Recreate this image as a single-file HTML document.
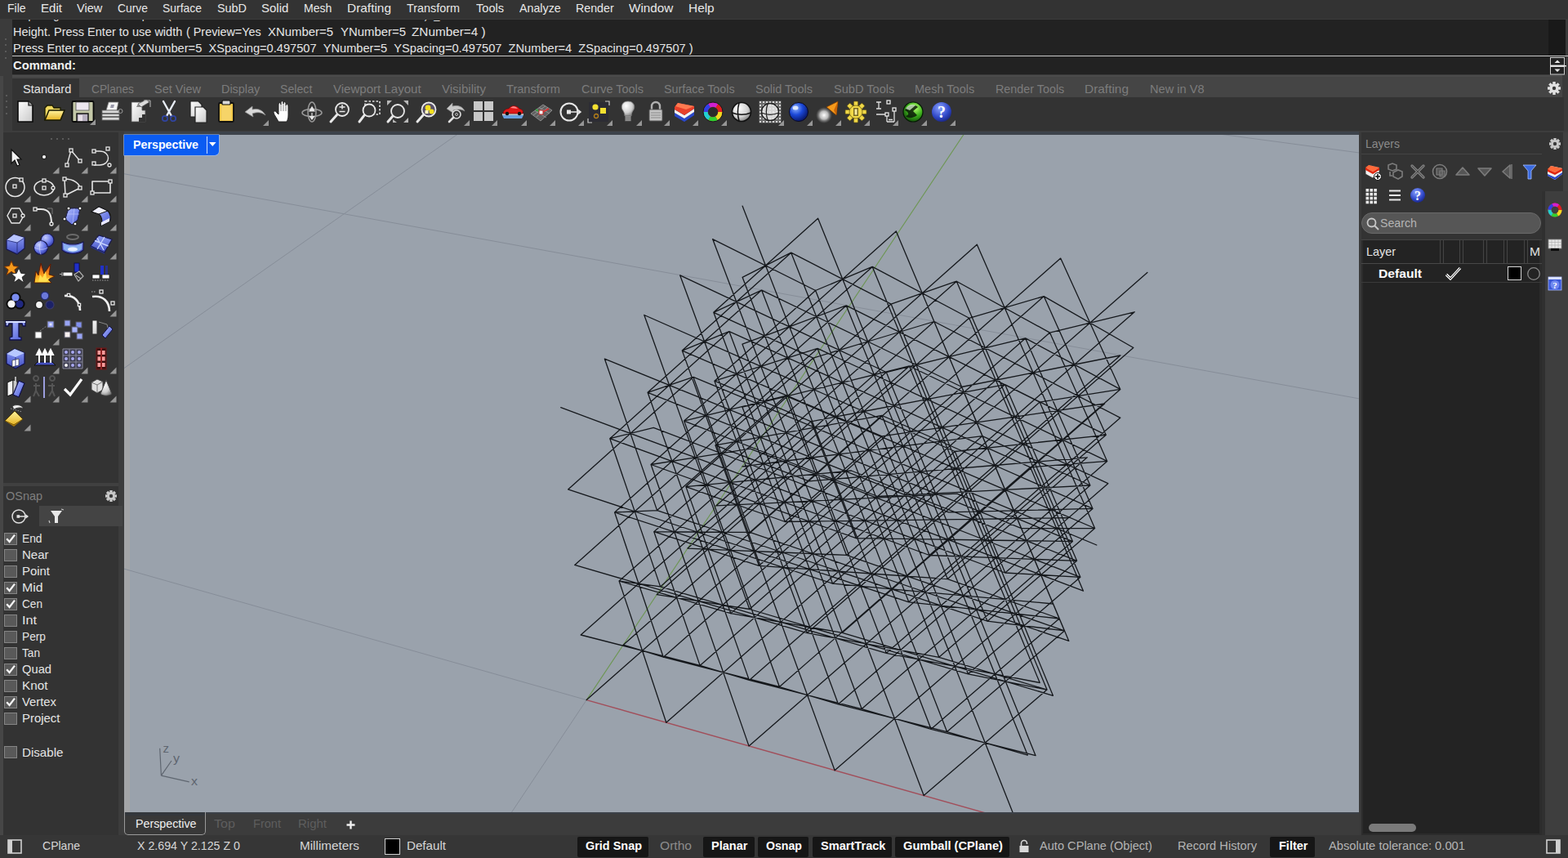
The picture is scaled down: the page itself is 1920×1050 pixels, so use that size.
<!DOCTYPE html>
<html><head><meta charset="utf-8"><title>Rhino 8</title>
<style>
html,body{margin:0;padding:0;background:#3a3a3a;overflow:hidden}
body{width:1920px;height:1050px;position:relative;font-family:"Liberation Sans",sans-serif}
.t{position:absolute;white-space:pre;line-height:1;transform-origin:0 50%;display:block}
.r{position:absolute}
svg{position:absolute;overflow:visible}
</style></head><body>
<div class="r" style="left:0px;top:0px;width:1920px;height:23px;background:#333333;"></div>
<div class="r" style="left:0px;top:23px;width:1920px;height:73px;background:#3b3b3b;"></div>
<div class="r" style="left:15px;top:24px;width:1881px;height:44px;background:#222222;"></div>
<div class="r" style="left:1896px;top:24px;width:21px;height:44px;background:#191919;"></div>
<div class="r" style="left:15px;top:68px;width:1905px;height:1px;background:#c8c8c8;"></div>
<div class="r" style="left:15px;top:69px;width:1881px;height:22px;background:#222222;"></div>
<div class="r" style="left:1896px;top:69px;width:21px;height:22px;background:#222222;"></div>
<div class="r" style="left:15px;top:92px;width:1898px;height:27px;background:#454545;"></div>
<div class="r" style="left:15px;top:92px;width:1898px;height:2px;background:#4b4b4b;"></div>
<div class="r" style="left:0px;top:96px;width:15px;height:65px;background:#3b3b3b;"></div>
<div class="r" style="left:15px;top:96px;width:82px;height:23px;background:#333333;"></div>
<div class="r" style="left:15px;top:119px;width:1900px;height:41px;background:#333333;"></div>
<div class="r" style="left:0px;top:160px;width:1920px;height:2px;background:#3d3d3d;"></div>
<div class="r" style="left:0px;top:162px;width:152px;height:860px;background:#3c3c3c;"></div>
<div class="r" style="left:0px;top:162px;width:145px;height:860px;background:#333333;"></div>
<div class="r" style="left:0px;top:93px;width:4px;height:929px;background:#464646;"></div>
<div class="r" style="left:4px;top:591px;width:141px;height:4px;background:#404040;"></div>
<div class="r" style="left:152px;top:161px;width:1512px;height:4px;background:#3d434b;"></div>
<div class="r" style="left:152px;top:994px;width:1512px;height:4px;background:#3b4047;"></div>
<div class="r" style="left:152px;top:165px;width:1512px;height:829px;background:#9aa2ac;"></div>
<div class="r" style="left:152px;top:165px;width:7px;height:829px;background:#a4a5a7;"></div>
<div class="r" style="left:1667px;top:162px;width:224px;height:860px;background:#333333;"></div>
<div class="r" style="left:1667px;top:293px;width:221px;height:729px;background:#2c2c2c;"></div>
<div class="r" style="left:1669px;top:293px;width:216px;height:727px;background:#232323;"></div>
<div class="r" style="left:1667px;top:188px;width:248px;height:1px;background:#444;"></div>
<div class="r" style="left:1888px;top:162px;width:32px;height:860px;background:#333333;"></div>
<div class="r" style="left:1914px;top:162px;width:6px;height:72px;background:#404040;"></div>
<div class="r" style="left:1892px;top:234px;width:28px;height:788px;background:#3e3e3e;"></div>
<div class="r" style="left:1888px;top:234px;width:4px;height:788px;background:#303030;"></div>
<div class="r" style="left:0px;top:1022px;width:1920px;height:28px;background:#363636;"></div>
<div class="r" style="left:151px;top:996px;width:1514px;height:26px;background:#3c3c3c;"></div>
<div class="r" style="left:6px;top:47px;width:2px;height:2px;background:#5a5a5a;"></div>
<div class="r" style="left:6px;top:54px;width:2px;height:2px;background:#5a5a5a;"></div>
<div class="r" style="left:6px;top:62px;width:2px;height:2px;background:#5a5a5a;"></div>
<div class="r" style="left:6px;top:70px;width:2px;height:2px;background:#5a5a5a;"></div>
<div class="r" style="left:7px;top:116px;width:2px;height:2px;background:#5a5a5a;"></div>
<div class="r" style="left:7px;top:123px;width:2px;height:2px;background:#5a5a5a;"></div>
<div class="r" style="left:7px;top:130px;width:2px;height:2px;background:#5a5a5a;"></div>
<div class="r" style="left:7px;top:138px;width:2px;height:2px;background:#5a5a5a;"></div>
<div class="r" style="left:62px;top:169px;width:2px;height:2px;background:#5a5a5a;"></div>
<div class="r" style="left:69px;top:169px;width:2px;height:2px;background:#5a5a5a;"></div>
<div class="r" style="left:76px;top:169px;width:2px;height:2px;background:#5a5a5a;"></div>
<div class="r" style="left:83px;top:169px;width:2px;height:2px;background:#5a5a5a;"></div>
<span class="t" style="left:9.0px;top:2.8px;font-size:14.8px;color:#e8e8e8;transform:scaleX(0.9519);">File</span>
<span class="t" style="left:50.0px;top:2.8px;font-size:14.8px;color:#e8e8e8;transform:scaleX(1.0195);">Edit</span>
<span class="t" style="left:94.3px;top:2.8px;font-size:14.8px;color:#e8e8e8;transform:scaleX(0.9871);">View</span>
<span class="t" style="left:144.0px;top:2.8px;font-size:14.8px;color:#e8e8e8;transform:scaleX(0.9372);">Curve</span>
<span class="t" style="left:199.3px;top:2.8px;font-size:14.8px;color:#e8e8e8;transform:scaleX(0.9411);">Surface</span>
<span class="t" style="left:265.7px;top:2.8px;font-size:14.8px;color:#e8e8e8;transform:scaleX(0.9724);">SubD</span>
<span class="t" style="left:320.0px;top:2.8px;font-size:14.8px;color:#e8e8e8;transform:scaleX(1.0119);">Solid</span>
<span class="t" style="left:372.3px;top:2.8px;font-size:14.8px;color:#e8e8e8;transform:scaleX(0.9505);">Mesh</span>
<span class="t" style="left:425.0px;top:2.8px;font-size:14.8px;color:#e8e8e8;transform:scaleX(1.0420);">Drafting</span>
<span class="t" style="left:498.3px;top:2.8px;font-size:14.8px;color:#e8e8e8;transform:scaleX(0.9718);">Transform</span>
<span class="t" style="left:582.7px;top:2.8px;font-size:14.8px;color:#e8e8e8;transform:scaleX(0.9841);">Tools</span>
<span class="t" style="left:636.0px;top:2.8px;font-size:14.8px;color:#e8e8e8;transform:scaleX(0.9629);">Analyze</span>
<span class="t" style="left:705.0px;top:2.8px;font-size:14.8px;color:#e8e8e8;transform:scaleX(0.9621);">Render</span>
<span class="t" style="left:770.0px;top:2.8px;font-size:14.8px;color:#e8e8e8;transform:scaleX(1.0316);">Window</span>
<span class="t" style="left:843.3px;top:2.8px;font-size:14.8px;color:#e8e8e8;transform:scaleX(1.0415);">Help</span>
<div class="r" style="left:15px;top:24px;width:1878px;height:44px;overflow:hidden">
<span class="t" style="left:1.0px;top:-12.9px;font-size:14.8px;color:#e0e0e0;transform:scaleX(0.8727);">Y spacing or first reference point ( Preview=Yes &nbsp;XNumber=5 &nbsp;YNumber=5 &nbsp;ZNumber=4 ): _Pause</span>
</div>
<span class="t" style="left:16.0px;top:31.8px;font-size:14.8px;color:#e6e6e6;transform:scaleX(0.9805);">Height. Press Enter to use width</span>
<span class="t" style="left:228.3px;top:31.8px;font-size:14.8px;color:#e6e6e6;transform:scaleX(0.9707);">( Preview=Yes</span>
<span class="t" style="left:328.3px;top:31.8px;font-size:14.8px;color:#e6e6e6;transform:scaleX(1.0078);">XNumber=5</span>
<span class="t" style="left:416.7px;top:31.8px;font-size:14.8px;color:#e6e6e6;transform:scaleX(1.0078);">YNumber=5</span>
<span class="t" style="left:504.3px;top:31.8px;font-size:14.8px;color:#e6e6e6;transform:scaleX(1.0355);">ZNumber=4 )</span>
<span class="t" style="left:16.0px;top:52.3px;font-size:14.8px;color:#e6e6e6;transform:scaleX(0.9885);">Press Enter to accept ( XNumber=5 &nbsp;XSpacing=0.497507 &nbsp;YNumber=5 &nbsp;YSpacing=0.497507 &nbsp;ZNumber=4 &nbsp;ZSpacing=0.497507 )</span>
<span class="t" style="left:16.0px;top:72.8px;font-size:14.8px;font-weight:700;color:#f0f0f0;transform:scaleX(0.9963);">Command:</span>
<span class="t" style="left:28.0px;top:101.6px;font-size:14.8px;color:#e4e4e4;transform:scaleX(0.9872);">Standard</span>
<span class="t" style="left:112.3px;top:101.6px;font-size:14.8px;color:#7c7c7c;transform:scaleX(0.9296);">CPlanes</span>
<span class="t" style="left:189.0px;top:101.6px;font-size:14.8px;color:#7c7c7c;transform:scaleX(0.9804);">Set View</span>
<span class="t" style="left:271.0px;top:101.6px;font-size:14.8px;color:#7c7c7c;transform:scaleX(0.9748);">Display</span>
<span class="t" style="left:343.3px;top:101.6px;font-size:14.8px;color:#7c7c7c;transform:scaleX(0.9578);">Select</span>
<span class="t" style="left:408.3px;top:101.6px;font-size:14.8px;color:#7c7c7c;transform:scaleX(1.0173);">Viewport Layout</span>
<span class="t" style="left:541.0px;top:101.6px;font-size:14.8px;color:#7c7c7c;transform:scaleX(1.0153);">Visibility</span>
<span class="t" style="left:620.0px;top:101.6px;font-size:14.8px;color:#7c7c7c;transform:scaleX(0.9868);">Transform</span>
<span class="t" style="left:711.7px;top:101.6px;font-size:14.8px;color:#7c7c7c;transform:scaleX(0.9759);">Curve Tools</span>
<span class="t" style="left:813.3px;top:101.6px;font-size:14.8px;color:#7c7c7c;transform:scaleX(0.9698);">Surface Tools</span>
<span class="t" style="left:925.0px;top:101.6px;font-size:14.8px;color:#7c7c7c;transform:scaleX(0.9817);">Solid Tools</span>
<span class="t" style="left:1020.7px;top:101.6px;font-size:14.8px;color:#7c7c7c;transform:scaleX(0.9852);">SubD Tools</span>
<span class="t" style="left:1120.0px;top:101.6px;font-size:14.8px;color:#7c7c7c;transform:scaleX(0.9828);">Mesh Tools</span>
<span class="t" style="left:1219.0px;top:101.6px;font-size:14.8px;color:#7c7c7c;transform:scaleX(0.9697);">Render Tools</span>
<span class="t" style="left:1328.3px;top:101.6px;font-size:14.8px;color:#7c7c7c;transform:scaleX(1.0420);">Drafting</span>
<span class="t" style="left:1408.3px;top:101.6px;font-size:14.8px;color:#7c7c7c;transform:scaleX(0.9888);">New in V8</span>
<div class="r" style="left:152px;top:165px;width:116px;height:25px;background:#0a5cf2;border-radius:0 0 5px 0;box-shadow:0 0 0 0.6px #9cc0ff"></div>
<div class="r" style="left:253px;top:167px;width:1px;height:21px;background:#cfe0ff;"></div>
<span class="t" style="left:163.4px;top:170.1px;font-size:14.200000000000001px;font-weight:700;color:#ffffff;transform:scaleX(1.0047);">Perspective</span>
<svg style="left:255.6px;top:173.8px" width="10" height="7"><path d="M0 0 L8.6 0 L4.3 5.1 Z" fill="#fff"/></svg>
<span class="t" style="left:7.0px;top:599.8px;font-size:14.8px;color:#7f7f7f;transform:scaleX(0.9766);">OSnap</span>
<div class="r" style="left:48px;top:619px;width:102px;height:25px;background:#444444;"></div>
<div class="r" style="left:5px;top:651.5px;width:16px;height:15px;background:#595959;border:1px solid #858585;box-sizing:border-box"></div>
<svg style="left:5px;top:651.5px" width="16" height="15"><path d="M3.2 7.2 L6.6 11 L13 2.6" fill="none" stroke="#f4f4f4" stroke-width="2.3"/></svg>
<span class="t" style="left:27.0px;top:652.3px;font-size:14.8px;color:#e4e4e4;transform:scaleX(0.9303);">End</span>
<div class="r" style="left:5px;top:671.5px;width:16px;height:15px;background:#595959;border:1px solid #858585;box-sizing:border-box"></div>
<span class="t" style="left:27.0px;top:672.3px;font-size:14.8px;color:#e4e4e4;transform:scaleX(1.0132);">Near</span>
<div class="r" style="left:5px;top:691.5px;width:16px;height:15px;background:#595959;border:1px solid #858585;box-sizing:border-box"></div>
<span class="t" style="left:27.0px;top:692.3px;font-size:14.8px;color:#e4e4e4;transform:scaleX(1.0079);">Point</span>
<div class="r" style="left:5px;top:711.5px;width:16px;height:15px;background:#595959;border:1px solid #858585;box-sizing:border-box"></div>
<svg style="left:5px;top:711.5px" width="16" height="15"><path d="M3.2 7.2 L6.6 11 L13 2.6" fill="none" stroke="#f4f4f4" stroke-width="2.3"/></svg>
<span class="t" style="left:27.0px;top:712.3px;font-size:14.8px;color:#e4e4e4;transform:scaleX(1.0693);">Mid</span>
<div class="r" style="left:5px;top:731.5px;width:16px;height:15px;background:#595959;border:1px solid #858585;box-sizing:border-box"></div>
<svg style="left:5px;top:731.5px" width="16" height="15"><path d="M3.2 7.2 L6.6 11 L13 2.6" fill="none" stroke="#f4f4f4" stroke-width="2.3"/></svg>
<span class="t" style="left:27.0px;top:732.3px;font-size:14.8px;color:#e4e4e4;transform:scaleX(0.9208);">Cen</span>
<div class="r" style="left:5px;top:751.5px;width:16px;height:15px;background:#595959;border:1px solid #858585;box-sizing:border-box"></div>
<span class="t" style="left:27.0px;top:752.3px;font-size:14.8px;color:#e4e4e4;transform:scaleX(1.0938);">Int</span>
<div class="r" style="left:5px;top:771.5px;width:16px;height:15px;background:#595959;border:1px solid #858585;box-sizing:border-box"></div>
<span class="t" style="left:27.0px;top:772.3px;font-size:14.8px;color:#e4e4e4;transform:scaleX(0.9276);">Perp</span>
<div class="r" style="left:5px;top:791.5px;width:16px;height:15px;background:#595959;border:1px solid #858585;box-sizing:border-box"></div>
<span class="t" style="left:27.0px;top:792.3px;font-size:14.8px;color:#e4e4e4;transform:scaleX(0.9219);">Tan</span>
<div class="r" style="left:5px;top:811.5px;width:16px;height:15px;background:#595959;border:1px solid #858585;box-sizing:border-box"></div>
<svg style="left:5px;top:811.5px" width="16" height="15"><path d="M3.2 7.2 L6.6 11 L13 2.6" fill="none" stroke="#f4f4f4" stroke-width="2.3"/></svg>
<span class="t" style="left:27.0px;top:812.3px;font-size:14.8px;color:#e4e4e4;transform:scaleX(0.9943);">Quad</span>
<div class="r" style="left:5px;top:831.5px;width:16px;height:15px;background:#595959;border:1px solid #858585;box-sizing:border-box"></div>
<span class="t" style="left:27.0px;top:832.3px;font-size:14.8px;color:#e4e4e4;transform:scaleX(1.0346);">Knot</span>
<div class="r" style="left:5px;top:851.5px;width:16px;height:15px;background:#595959;border:1px solid #858585;box-sizing:border-box"></div>
<svg style="left:5px;top:851.5px" width="16" height="15"><path d="M3.2 7.2 L6.6 11 L13 2.6" fill="none" stroke="#f4f4f4" stroke-width="2.3"/></svg>
<span class="t" style="left:27.0px;top:852.3px;font-size:14.8px;color:#e4e4e4;transform:scaleX(1.0010);">Vertex</span>
<div class="r" style="left:5px;top:871.5px;width:16px;height:15px;background:#595959;border:1px solid #858585;box-sizing:border-box"></div>
<span class="t" style="left:27.0px;top:872.3px;font-size:14.8px;color:#e4e4e4;transform:scaleX(1.0095);">Project</span>
<div class="r" style="left:5px;top:913.0px;width:16px;height:15px;background:#595959;border:1px solid #858585;box-sizing:border-box"></div>
<span class="t" style="left:27.0px;top:913.8px;font-size:14.8px;color:#e4e4e4;transform:scaleX(1.0232);">Disable</span>
<span class="t" style="left:1672.0px;top:168.8px;font-size:14.8px;color:#8a8a8a;transform:scaleX(0.9455);">Layers</span>
<div class="r" style="left:1667px;top:260px;width:220px;height:26px;background:#565656;border-radius:13px;border:1px solid #6a6a6a;box-sizing:border-box"></div>
<span class="t" style="left:1690.0px;top:265.8px;font-size:14.8px;color:#b4b4b4;transform:scaleX(0.9596);">Search</span>
<svg style="left:1672px;top:265px" width="18" height="18"><circle cx="7.5" cy="7.5" r="5" fill="none" stroke="#c8c8c8" stroke-width="1.8"/><path d="M11 11 L16 16" stroke="#c8c8c8" stroke-width="2"/></svg>
<div class="r" style="left:1667px;top:293px;width:221px;height:1px;background:#444;"></div>
<div class="r" style="left:1667px;top:322px;width:221px;height:1px;background:#484848;"></div>
<div class="r" style="left:1763px;top:293px;width:1px;height:29px;background:#444;"></div>
<div class="r" style="left:1767px;top:293px;width:1px;height:29px;background:#444;"></div>
<div class="r" style="left:1787px;top:293px;width:1px;height:29px;background:#444;"></div>
<div class="r" style="left:1791px;top:293px;width:1px;height:29px;background:#444;"></div>
<div class="r" style="left:1816px;top:293px;width:1px;height:29px;background:#444;"></div>
<div class="r" style="left:1820px;top:293px;width:1px;height:29px;background:#444;"></div>
<div class="r" style="left:1841px;top:293px;width:1px;height:29px;background:#444;"></div>
<div class="r" style="left:1845px;top:293px;width:1px;height:29px;background:#444;"></div>
<div class="r" style="left:1866px;top:293px;width:1px;height:29px;background:#444;"></div>
<div class="r" style="left:1870px;top:293px;width:1px;height:29px;background:#444;"></div>
<span class="t" style="left:1673.0px;top:301.3px;font-size:14.8px;color:#e4e4e4;transform:scaleX(0.9724);">Layer</span>
<span class="t" style="left:1873.0px;top:301.3px;font-size:14.8px;color:#e4e4e4;transform:scaleX(1.0545);">M</span>
<div class="r" style="left:1667px;top:345px;width:221px;height:1px;background:#3a3a3a;"></div>
<span class="t" style="left:1688.0px;top:327.8px;font-size:14.8px;font-weight:700;color:#ffffff;transform:scaleX(1.0566);">Default</span>
<svg style="left:1768px;top:325px" width="24" height="20"><path d="M3 11 L8 16 L20 3" fill="none" stroke="#fff" stroke-width="3.2"/><path d="M3 11 L8 16 L20 3" fill="none" stroke="#222" stroke-width="1"/></svg>
<div class="r" style="left:1846px;top:326px;width:17px;height:17px;background:#000;border:1.5px solid #d8d8d8;box-sizing:border-box"></div>
<svg style="left:1869px;top:326px" width="18" height="18"><circle cx="9" cy="9" r="7.3" fill="none" stroke="#8a8a8a" stroke-width="1.3"/></svg>
<div class="r" style="left:1676px;top:1008px;width:58px;height:10px;background:#7a7a7a;border-radius:5px"></div>
<div class="r" style="left:152px;top:994px;width:100px;height:28px;background:#383838;border:1px solid #9a9a9a;border-top:none;border-radius:0 0 5px 5px;box-sizing:border-box"></div>
<div class="r" style="left:153px;top:994px;width:98px;height:4px;background:#33373c;"></div>
<span class="t" style="left:166.0px;top:1001.3px;font-size:14.8px;color:#f0f0f0;transform:scaleX(0.9635);">Perspective</span>
<span class="t" style="left:262.0px;top:1001.3px;font-size:14.8px;color:#5e5e5e;transform:scaleX(1.0896);">Top</span>
<span class="t" style="left:310.0px;top:1001.3px;font-size:14.8px;color:#5e5e5e;transform:scaleX(0.9843);">Front</span>
<span class="t" style="left:365.0px;top:1001.3px;font-size:14.8px;color:#5e5e5e;transform:scaleX(1.0130);">Right</span>
<svg style="left:424px;top:1004px" width="11" height="11"><path d="M5.5 0.5V10.5M0.5 5.5H10.5" stroke="#f0f0f0" stroke-width="2.4"/></svg>
<span class="t" style="left:52.0px;top:1028.3px;font-size:14.8px;color:#d6d6d6;transform:scaleX(0.9477);">CPlane</span>
<span class="t" style="left:168.0px;top:1028.3px;font-size:14.8px;color:#d6d6d6;transform:scaleX(0.9610);">X 2.694 Y 2.125 Z 0</span>
<span class="t" style="left:367.0px;top:1028.3px;font-size:14.8px;color:#d6d6d6;transform:scaleX(1.0324);">Millimeters</span>
<div class="r" style="left:471px;top:1026px;width:19px;height:20px;background:#000;border:1.5px solid #d0d0d0;box-sizing:border-box"></div>
<span class="t" style="left:498.0px;top:1028.3px;font-size:14.8px;color:#d6d6d6;transform:scaleX(1.0236);">Default</span>
<div class="r" style="left:707px;top:1023.5px;width:87px;height:25px;background:#161616;border-radius:2px"></div>
<span class="t" style="left:716.5px;top:1028.3px;font-size:14.8px;font-weight:700;color:#ffffff;transform:scaleX(0.9757);">Grid Snap</span>
<span class="t" style="left:808.0px;top:1028.3px;font-size:14.8px;color:#8c8c8c;transform:scaleX(1.0536);">Ortho</span>
<div class="r" style="left:861px;top:1023.5px;width:63px;height:25px;background:#161616;border-radius:2px"></div>
<span class="t" style="left:870.5px;top:1028.3px;font-size:14.8px;font-weight:700;color:#ffffff;transform:scaleX(0.9835);">Planar</span>
<div class="r" style="left:928px;top:1023.5px;width:62px;height:25px;background:#161616;border-radius:2px"></div>
<span class="t" style="left:937.5px;top:1028.3px;font-size:14.8px;font-weight:700;color:#ffffff;transform:scaleX(0.9554);">Osnap</span>
<div class="r" style="left:995px;top:1023.5px;width:97px;height:25px;background:#161616;border-radius:2px"></div>
<span class="t" style="left:1004.5px;top:1028.3px;font-size:14.8px;font-weight:700;color:#ffffff;transform:scaleX(0.9860);">SmartTrack</span>
<div class="r" style="left:1096px;top:1023.5px;width:140px;height:25px;background:#161616;border-radius:2px"></div>
<span class="t" style="left:1106.0px;top:1028.3px;font-size:14.8px;font-weight:700;color:#ffffff;transform:scaleX(0.9890);">Gumball (CPlane)</span>
<span class="t" style="left:1273.0px;top:1028.3px;font-size:14.8px;color:#b4b4b4;transform:scaleX(0.9868);">Auto CPlane (Object)</span>
<span class="t" style="left:1442.0px;top:1028.3px;font-size:14.8px;color:#b4b4b4;transform:scaleX(0.9911);">Record History</span>
<div class="r" style="left:1555px;top:1023.5px;width:55px;height:25px;background:#161616;border-radius:2px"></div>
<span class="t" style="left:1565.5px;top:1028.3px;font-size:14.8px;font-weight:700;color:#ffffff;transform:scaleX(0.9811);">Filter</span>
<span class="t" style="left:1627.0px;top:1028.3px;font-size:14.8px;color:#b4b4b4;transform:scaleX(0.9949);">Absolute tolerance: 0.001</span>
<svg style="left:9px;top:1027px" width="18" height="18"><rect x="1" y="1" width="16" height="16" fill="none" stroke="#d0d0d0" stroke-width="1.6"/><rect x="1" y="1" width="5" height="16" fill="#d0d0d0"/></svg>
<svg style="left:1893px;top:1027px" width="18" height="18"><rect x="1" y="1" width="16" height="16" fill="none" stroke="#d0d0d0" stroke-width="1.6"/><rect x="12" y="1" width="5" height="16" fill="#d0d0d0"/></svg>
<svg style="left:1247px;top:1027px" width="14" height="17"><path d="M3.5 8 V5 a3.5 3.5 0 0 1 7 0 V6" fill="none" stroke="#d8d8d8" stroke-width="1.6"/><rect x="1.5" y="8" width="11" height="8" fill="#d8d8d8"/></svg>
<svg width="0" height="0" style="left:0;top:0"><defs>
<linearGradient id="gW" x1="0" y1="0" x2="1" y2="1"><stop offset="0" stop-color="#ffffff"/><stop offset="1" stop-color="#c8c8c8"/></linearGradient>
<linearGradient id="gY" x1="0" y1="0" x2="0" y2="1"><stop offset="0" stop-color="#fff3a0"/><stop offset="1" stop-color="#e6b422"/></linearGradient>
<linearGradient id="gB" x1="0" y1="0" x2="1" y2="1"><stop offset="0" stop-color="#b4c0ff"/><stop offset="1" stop-color="#4a5ad8"/></linearGradient>
<linearGradient id="gB2" x1="0" y1="0" x2="0" y2="1"><stop offset="0" stop-color="#8fa0f8"/><stop offset="1" stop-color="#3f4cc0"/></linearGradient>
<radialGradient id="gSph" cx="0.35" cy="0.3" r="0.8"><stop offset="0" stop-color="#ffffff"/><stop offset="0.6" stop-color="#d0d0d0"/><stop offset="1" stop-color="#707070"/></radialGradient>
<radialGradient id="gBlue" cx="0.35" cy="0.3" r="0.8"><stop offset="0" stop-color="#8fb4ff"/><stop offset="0.45" stop-color="#1b48d8"/><stop offset="1" stop-color="#040c50"/></radialGradient>
<radialGradient id="gHelp" cx="0.4" cy="0.3" r="0.8"><stop offset="0" stop-color="#8aa2ff"/><stop offset="0.6" stop-color="#3048c8"/><stop offset="1" stop-color="#141c70"/></radialGradient>
<radialGradient id="gGreen" cx="0.6" cy="0.3" r="0.8"><stop offset="0" stop-color="#b8ff70"/><stop offset="0.5" stop-color="#3cae1c"/><stop offset="1" stop-color="#0a3a06"/></radialGradient>
<radialGradient id="gBS" cx="0.35" cy="0.3" r="0.8"><stop offset="0" stop-color="#c4ccff"/><stop offset="0.6" stop-color="#6474e6"/><stop offset="1" stop-color="#28309a"/></radialGradient>
<radialGradient id="gGlow" cx="0.5" cy="0.5" r="0.5"><stop offset="0" stop-color="#ffffff"/><stop offset="0.5" stop-color="#dddddd" stop-opacity="0.8"/><stop offset="1" stop-color="#888" stop-opacity="0"/></radialGradient>
<linearGradient id="gFire" x1="0" y1="0" x2="0" y2="1"><stop offset="0" stop-color="#d8401a"/><stop offset="0.6" stop-color="#f59a1c"/><stop offset="1" stop-color="#ffd83a"/></linearGradient>
</defs></svg>
<svg style="left:11px;top:117px" width="40" height="40" viewBox="-20 -20 40 40"><path d="M-9 -13 H4 L9 -8 V12 H-9 Z" fill="url(#gW)" stroke="#0a0a0a" stroke-width="1.6"/><path d="M4 -13 V-8 H9" fill="#aaa" stroke="#0a0a0a" stroke-width="1.2"/></svg>
<svg style="left:46px;top:117px" width="40" height="40" viewBox="-20 -20 40 40"><path d="M-11 10 V-5 L-8 -8 H-2 L0 -5 H8 V-2" fill="#f0d860" stroke="#1a1a00" stroke-width="1.3"/><path d="M-11 10 L-6 -2 H13 L8 10 Z" fill="url(#gY)" stroke="#1a1a00" stroke-width="1.5"/></svg>
<svg style="left:81px;top:117px" width="40" height="40" viewBox="-20 -20 40 40"><rect x="-12.5" y="-13" width="26" height="25" rx="1.5" fill="#c4c8a8" stroke="#0a0a0a" stroke-width="1.8"/><rect x="-8" y="-12" width="16" height="10" fill="#ece6ee" stroke="#555" stroke-width="0.8"/><rect x="-7" y="2" width="14" height="10" fill="#b8b0c0" stroke="#0a0a0a" stroke-width="1.4"/><rect x="-5" y="4" width="5" height="7" fill="#e8e0e8"/><path d="M16 9 L16 16 L9 16 Z" fill="#969696"/></svg>
<svg style="left:116px;top:117px" width="40" height="40" viewBox="-20 -20 40 40"><path d="M-6 -2 L-3 -12 H9 L7 -2 Z" fill="#f4f4f4" stroke="#777" stroke-width="0.8"/><path d="M0 -9 L4 -9 L3 -5 L-1 -5Z" fill="#99a"/><rect x="-11" y="-2" width="21" height="12" fill="#d8d8d8" stroke="#666" stroke-width="0.8"/><path d="M-11 2 H10 M-11 6 H10" stroke="#4a4a4a" stroke-width="1.6"/><circle cx="11.5" cy="-1" r="2.5" fill="none" stroke="#999" stroke-width="1"/></svg>
<svg style="left:151px;top:117px" width="40" height="40" viewBox="-20 -20 40 40"><path d="M-10 -12 H3 V-2 H7 V12 H-10 Z" fill="url(#gW)" stroke="#555" stroke-width="0.8"/><path d="M7 3 H3 V7 H-1 V12 H7Z" fill="#333"/><path d="M-2 -10 L8 -15 L12 -12 L2 -6 Z" fill="#ddd" stroke="#555" stroke-width="0.8"/><path d="M5 -14 H13 V-6" fill="none" stroke="#bbb" stroke-width="1"/><path d="M-4 -6 L-2 -10 L2 -6Z" fill="#888"/></svg>
<svg style="left:187px;top:117px" width="40" height="40" viewBox="-20 -20 40 40"><path d="M-7 -13 L3 5 M7 -13 L-3 5" stroke="#e8eef8" stroke-width="2.4" stroke-linecap="round"/><circle cx="-5" cy="8" r="3.2" fill="none" stroke="#3044a0" stroke-width="1.8"/><circle cx="5" cy="8" r="3.2" fill="none" stroke="#3044a0" stroke-width="1.8"/></svg>
<svg style="left:222px;top:117px" width="40" height="40" viewBox="-20 -20 40 40"><path d="M-9 -13 H1 L5 -9 V6 H-9 Z" fill="url(#gW)" stroke="#222" stroke-width="1.2"/><path d="M-3 -6 H7 L11 -2 V13 H-3 Z" fill="url(#gW)" stroke="#222" stroke-width="1.2"/></svg>
<svg style="left:257px;top:117px" width="40" height="40" viewBox="-20 -20 40 40"><rect x="-9" y="-11" width="18" height="23" rx="1.5" fill="#f2c84a" stroke="#111" stroke-width="1.8"/><rect x="-6" y="-8" width="12" height="18" fill="#f6d468"/><rect x="-5" y="-14" width="10" height="5" rx="1" fill="#d8d8d8" stroke="#111" stroke-width="1.2"/></svg>
<svg style="left:292px;top:117px" width="40" height="40" viewBox="-20 -20 40 40"><path d="M-12 0 L-3 -7 L-3 -3 C4 -5 10 -2 13 4 C8 0 3 0 -3 2 L-2 6 Z" fill="#d8d8d8" stroke="#8a8a8a" stroke-width="0.8"/><path d="M17 10 L17 17 L10 17 Z" fill="#969696"/></svg>
<svg style="left:327px;top:117px" width="40" height="40" viewBox="-20 -20 40 40"><path d="M-6 12 C-8 8 -11 4 -12 1 C-12 -1 -10 -2 -8 1 L-6 3 V-9 C-6 -12 -3 -12 -3 -9 V-11 C-3 -14 0 -14 0 -11 V-10 C0 -13 3 -13 3 -10 V-8 C3 -10 6 -10 6 -7 V4 C6 8 5 10 4 12 Z" fill="#fdfdfd" stroke="#222" stroke-width="1"/><path d="M-3 -9 V-1 M0 -10 V-1 M3 -8 V-1" stroke="#777" stroke-width="0.9"/></svg>
<svg style="left:362px;top:117px" width="40" height="40" viewBox="-20 -20 40 40"><ellipse cx="0" cy="0" rx="5" ry="12" fill="none" stroke="#9a9a9a" stroke-width="1.5"/><ellipse cx="0" cy="1" rx="12" ry="4.5" fill="none" stroke="#9a9a9a" stroke-width="1.5"/><path d="M0 -6 L-3 -1 H3Z M0 1 V8 M-3 5 L0 9 L3 5" fill="#e8e8e8" stroke="#e8e8e8" stroke-width="1.2"/></svg>
<svg style="left:397px;top:117px" width="40" height="40" viewBox="-20 -20 40 40"><path d="M-3.76 2.76 L-12 12" stroke="#e8e8e8" stroke-width="3" stroke-linecap="round"/><circle cx="2" cy="-3" r="8" fill="#3a3a3a" stroke="#e8e8e8" stroke-width="1.8"/><path d="M-1.5 -6 H5.5 M2 -9 V-3.5 M-1.5 -0.5 H5.5" stroke="#e8e8e8" stroke-width="1.5"/></svg>
<svg style="left:432px;top:117px" width="40" height="40" viewBox="-20 -20 40 40"><rect x="-5" y="-13" width="18" height="16" fill="none" stroke="#e0e0e0" stroke-width="1.6" stroke-dasharray="2.5 2"/><path d="M-5.3999999999999995 3.3999999999999995 L-12 12" stroke="#e8e8e8" stroke-width="3" stroke-linecap="round"/><circle cx="0" cy="-2" r="7.5" fill="#3a3a3a" stroke="#e8e8e8" stroke-width="1.8"/></svg>
<svg style="left:467px;top:117px" width="40" height="40" viewBox="-20 -20 40 40"><path d="M-5.76 4.76 L-12 12" stroke="#e8e8e8" stroke-width="3" stroke-linecap="round"/><circle cx="0" cy="-1" r="8" fill="#3a3a3a" stroke="#e8e8e8" stroke-width="1.8"/><path d="M-13 -14 H-7 L-13 -8Z M13 -14 H7 L13 -8Z M13 13 H7 L13 7Z M-6 13 H-1 L-6 9Z" fill="#b8b8b8"/></svg>
<svg style="left:503px;top:117px" width="40" height="40" viewBox="-20 -20 40 40"><path d="M-4.12 3.12 L-12 12" stroke="#e8e8e8" stroke-width="3" stroke-linecap="round"/><circle cx="2" cy="-3" r="8.5" fill="#585068" stroke="#e8e8e8" stroke-width="1.8"/><circle cx="1" cy="-5" r="3.4" fill="#f4e020"/><circle cx="5.5" cy="-0.5" r="3" fill="#f4e020"/><rect x="-2.5" y="-2" width="4" height="4" fill="#fff8c0"/></svg>
<svg style="left:538px;top:117px" width="40" height="40" viewBox="-20 -20 40 40"><path d="M-11 -4 L-4 -11 L-4 -7 C3 -9 9 -6 11 -1 C6 -4 2 -3 -3 -2 L-2 2 Z" fill="#c8c8c8" stroke="#888" stroke-width="0.8"/><circle cx="1" cy="3" r="5" fill="#3a3a3a" stroke="#e0e0e0" stroke-width="1.6"/><circle cx="1" cy="3" r="1.5" fill="none" stroke="#bbb" stroke-width="1"/><path d="M-3 7 L-8 12" stroke="#e0e0e0" stroke-width="2.6" stroke-linecap="round"/><path d="M17 10 L17 17 L10 17 Z" fill="#969696"/></svg>
<svg style="left:572px;top:117px" width="40" height="40" viewBox="-20 -20 40 40"><rect x="-12" y="-13" width="11" height="11" fill="#c8c8c8"/><rect x="1" y="-13" width="11" height="11" fill="#c8c8c8"/><rect x="-12" y="0" width="11" height="11" fill="#c8c8c8"/><rect x="1" y="0" width="11" height="11" fill="#c8c8c8"/><path d="M17 10 L17 17 L10 17 Z" fill="#969696"/></svg>
<svg style="left:608px;top:117px" width="40" height="40" viewBox="-20 -20 40 40"><path d="M-13 4 H13 L11 8 H-11Z" fill="#68a0e0"/><path d="M-13 3 H13" stroke="#f0f0f0" stroke-width="1.5"/><path d="M-12 1 C-11 -3 -7 -4 -5 -4 C-3 -8 4 -9 8 -4 C12 -3 13 -1 12 2 H-12Z" fill="#e01818" stroke="#700" stroke-width="0.6"/><path d="M-3 -5 C0 -8 4 -7 6 -4Z" fill="#f88"/><circle cx="-7" cy="2" r="2.2" fill="#111"/><circle cx="8" cy="2" r="2.2" fill="#111"/><path d="M17 10 L17 17 L10 17 Z" fill="#969696"/></svg>
<svg style="left:643px;top:117px" width="40" height="40" viewBox="-20 -20 40 40"><path d="M-13 2 L2 -9 L13 -2 L-1 11Z" fill="#606060" stroke="#9a9a9a" stroke-width="0.8"/><path d="M-8 -1.5 L6 7 M-3 -5.5 L10 2 M-6 6 L8 -5.5 M-10 4 L5 -7.5" stroke="#a8a8a8" stroke-width="0.7"/><path d="M0 1 L9 -4" stroke="#e03030" stroke-width="1.8"/><path d="M0 1 L-7 -3" stroke="#30b040" stroke-width="1.8"/><rect x="-3" y="-2" width="5" height="5" fill="#f8f8f8" stroke="#c02020" stroke-width="1"/><path d="M17 10 L17 17 L10 17 Z" fill="#969696"/></svg>
<svg style="left:678px;top:117px" width="40" height="40" viewBox="-20 -20 40 40"><circle cx="-1" cy="0" r="10.5" fill="none" stroke="#e8e8e8" stroke-width="2"/><rect x="-4" y="-2.5" width="5" height="5" fill="#e8e8e8"/><path d="M1 0 H13 M10 -2.5 L13 0 L10 2.5" stroke="#e8e8e8" stroke-width="1.5" fill="none"/><path d="M17 10 L17 17 L10 17 Z" fill="#969696"/></svg>
<svg style="left:713px;top:117px" width="40" height="40" viewBox="-20 -20 40 40"><rect x="-12" y="-12" width="24" height="24" fill="#2c2c34"/><circle cx="-4" cy="-6" r="3.6" fill="#f4e030"/><rect x="2" y="-5" width="7" height="7" fill="#f4e030"/><circle cx="-3" cy="5" r="2.5" fill="none" stroke="#b88018" stroke-width="1.3"/><path d="M-13 8 V13 H-8 M8 -13 H13 V-8" stroke="#ccc" stroke-width="1.2" fill="none"/><path d="M17 10 L17 17 L10 17 Z" fill="#969696"/></svg>
<svg style="left:749px;top:117px" width="40" height="40" viewBox="-20 -20 40 40"><path d="M0 -13 C7 -13 9 -7 7 -3 C5 0 4 2 4 5 H-4 C-4 2 -5 0 -7 -3 C-9 -7 -7 -13 0 -13Z" fill="url(#gSph)" stroke="#888" stroke-width="0.8"/><rect x="-3.5" y="5" width="7" height="6" fill="#a8a8a8" stroke="#666" stroke-width="0.7"/><path d="M-3.5 7 H3.5 M-3.5 9 H3.5" stroke="#555" stroke-width="0.8"/><path d="M17 10 L17 17 L10 17 Z" fill="#969696"/></svg>
<svg style="left:783px;top:117px" width="40" height="40" viewBox="-20 -20 40 40"><path d="M-5 -3 V-7 a5 5 0 0 1 10 0 V-3" fill="none" stroke="#b0b0b0" stroke-width="2.4"/><rect x="-8" y="-3" width="16" height="14" rx="1" fill="#c4c4c4" stroke="#555" stroke-width="1"/><path d="M-6 1 H6 M-6 4 H6 M-6 7 H6" stroke="#8a8a8a" stroke-width="1.2"/><path d="M17 10 L17 17 L10 17 Z" fill="#969696"/></svg>
<svg style="left:818px;top:117px" width="40" height="40" viewBox="-20 -20 40 40"><path d="M-12 -1 L-8 -11 L12 -6 L12 4 L0 12 L-12 5Z" fill="#1c2a80"/><path d="M-12 1 L0 8 L12 0 V4 L0 12 L-12 5Z" fill="#2a48c8"/><path d="M-12 -3 L0 4 L12 -4 V0 L0 8 L-12 1Z" fill="#f4f4f4"/><path d="M-12 -6 L-8 -11 L12 -7 V-4 L0 4 L-12 -3Z" fill="#e8402a"/><path d="M-8 -11 L12 -7 L2 -3 L-11 -7Z" fill="#ff7a50"/><path d="M17 10 L17 17 L10 17 Z" fill="#969696"/></svg>
<svg style="left:853px;top:117px" width="40" height="40" viewBox="-20 -20 40 40"><circle r="9" fill="none" stroke="#e02020" stroke-width="5.5"/><circle r="9" fill="none" stroke="#f0d820" stroke-width="5.5" stroke-dasharray="9.42 47.12" stroke-dashoffset="0"/><circle r="9" fill="none" stroke="#30d030" stroke-width="5.5" stroke-dasharray="9.42 47.12" stroke-dashoffset="-9.42"/><circle r="9" fill="none" stroke="#20d0d0" stroke-width="5.5" stroke-dasharray="9.42 47.12" stroke-dashoffset="-18.84"/><circle r="9" fill="none" stroke="#3040e8" stroke-width="5.5" stroke-dasharray="9.42 47.12" stroke-dashoffset="-28.26"/><circle r="9" fill="none" stroke="#d020d0" stroke-width="5.5" stroke-dasharray="9.42 47.12" stroke-dashoffset="-37.68"/><circle r="12" fill="none" stroke="#1a1a1a" stroke-width="1"/><circle r="5.8" fill="#2a2a2a"/><path d="M17 10 L17 17 L10 17 Z" fill="#969696"/></svg>
<svg style="left:888px;top:117px" width="40" height="40" viewBox="-20 -20 40 40"><circle r="11.5" fill="url(#gSph)" stroke="#111" stroke-width="1.6"/><path d="M-3 -11 C-5 -4 -5 4 -3 11 M-11.5 1 C-4 4 4 4 11.5 1" fill="none" stroke="#111" stroke-width="1.5"/></svg>
<svg style="left:923px;top:117px" width="40" height="40" viewBox="-20 -20 40 40"><rect x="-13.5" y="-13.5" width="27" height="27" fill="#6c6c6c"/><rect x="-13" y="-13" width="2" height="2" fill="#d8d8d8"/><rect x="-13" y="-9" width="2" height="2" fill="#d8d8d8"/><rect x="-13" y="-5" width="2" height="2" fill="#d8d8d8"/><rect x="-13" y="-1" width="2" height="2" fill="#d8d8d8"/><rect x="-13" y="3" width="2" height="2" fill="#d8d8d8"/><rect x="-13" y="7" width="2" height="2" fill="#d8d8d8"/><rect x="-13" y="11" width="2" height="2" fill="#d8d8d8"/><rect x="-9" y="-13" width="2" height="2" fill="#d8d8d8"/><rect x="-9" y="-9" width="2" height="2" fill="#d8d8d8"/><rect x="-9" y="-5" width="2" height="2" fill="#d8d8d8"/><rect x="-9" y="-1" width="2" height="2" fill="#d8d8d8"/><rect x="-9" y="3" width="2" height="2" fill="#d8d8d8"/><rect x="-9" y="7" width="2" height="2" fill="#d8d8d8"/><rect x="-9" y="11" width="2" height="2" fill="#d8d8d8"/><rect x="-5" y="-13" width="2" height="2" fill="#d8d8d8"/><rect x="-5" y="-9" width="2" height="2" fill="#d8d8d8"/><rect x="-5" y="-5" width="2" height="2" fill="#d8d8d8"/><rect x="-5" y="-1" width="2" height="2" fill="#d8d8d8"/><rect x="-5" y="3" width="2" height="2" fill="#d8d8d8"/><rect x="-5" y="7" width="2" height="2" fill="#d8d8d8"/><rect x="-5" y="11" width="2" height="2" fill="#d8d8d8"/><rect x="-1" y="-13" width="2" height="2" fill="#d8d8d8"/><rect x="-1" y="-9" width="2" height="2" fill="#d8d8d8"/><rect x="-1" y="-5" width="2" height="2" fill="#d8d8d8"/><rect x="-1" y="-1" width="2" height="2" fill="#d8d8d8"/><rect x="-1" y="3" width="2" height="2" fill="#d8d8d8"/><rect x="-1" y="7" width="2" height="2" fill="#d8d8d8"/><rect x="-1" y="11" width="2" height="2" fill="#d8d8d8"/><rect x="3" y="-13" width="2" height="2" fill="#d8d8d8"/><rect x="3" y="-9" width="2" height="2" fill="#d8d8d8"/><rect x="3" y="-5" width="2" height="2" fill="#d8d8d8"/><rect x="3" y="-1" width="2" height="2" fill="#d8d8d8"/><rect x="3" y="3" width="2" height="2" fill="#d8d8d8"/><rect x="3" y="7" width="2" height="2" fill="#d8d8d8"/><rect x="3" y="11" width="2" height="2" fill="#d8d8d8"/><rect x="7" y="-13" width="2" height="2" fill="#d8d8d8"/><rect x="7" y="-9" width="2" height="2" fill="#d8d8d8"/><rect x="7" y="-5" width="2" height="2" fill="#d8d8d8"/><rect x="7" y="-1" width="2" height="2" fill="#d8d8d8"/><rect x="7" y="3" width="2" height="2" fill="#d8d8d8"/><rect x="7" y="7" width="2" height="2" fill="#d8d8d8"/><rect x="7" y="11" width="2" height="2" fill="#d8d8d8"/><rect x="11" y="-13" width="2" height="2" fill="#d8d8d8"/><rect x="11" y="-9" width="2" height="2" fill="#d8d8d8"/><rect x="11" y="-5" width="2" height="2" fill="#d8d8d8"/><rect x="11" y="-1" width="2" height="2" fill="#d8d8d8"/><rect x="11" y="3" width="2" height="2" fill="#d8d8d8"/><rect x="11" y="7" width="2" height="2" fill="#d8d8d8"/><rect x="11" y="11" width="2" height="2" fill="#d8d8d8"/><circle r="10.5" fill="#e8e8e8" fill-opacity="0.85" stroke="#222" stroke-width="1.4"/><path d="M-3 -10 C-5 -4 -5 4 -3 10 M-10.5 1 C-4 4 4 4 10.5 1" fill="none" stroke="#222" stroke-width="1.3"/><path d="M17 10 L17 17 L10 17 Z" fill="#969696"/></svg>
<svg style="left:958px;top:117px" width="40" height="40" viewBox="-20 -20 40 40"><circle r="11.5" fill="url(#gBlue)" stroke="#0a0a20" stroke-width="1"/><ellipse cx="-4" cy="-5" rx="3.5" ry="2.5" fill="#e8f0ff" fill-opacity="0.9"/><path d="M17 10 L17 17 L10 17 Z" fill="#969696"/></svg>
<svg style="left:993px;top:117px" width="40" height="40" viewBox="-20 -20 40 40"><circle cx="-4" cy="4" r="10" fill="url(#gGlow)"/><path d="M-1 -6 L13 -13 L11 4 Z" fill="#f59a1c" stroke="#7a3a00" stroke-width="0.8"/><path d="M13 -13 L11 4 L8 -2Z" fill="#c86408"/><path d="M17 10 L17 17 L10 17 Z" fill="#969696"/></svg>
<svg style="left:1028px;top:117px" width="40" height="40" viewBox="-20 -20 40 40"><rect x="-2.6" y="-13" width="5.2" height="7" rx="1" fill="#f0d848" stroke="#6a5a10" stroke-width="0.7" transform="rotate(0)"/><rect x="-2.6" y="-13" width="5.2" height="7" rx="1" fill="#f0d848" stroke="#6a5a10" stroke-width="0.7" transform="rotate(45)"/><rect x="-2.6" y="-13" width="5.2" height="7" rx="1" fill="#f0d848" stroke="#6a5a10" stroke-width="0.7" transform="rotate(90)"/><rect x="-2.6" y="-13" width="5.2" height="7" rx="1" fill="#f0d848" stroke="#6a5a10" stroke-width="0.7" transform="rotate(135)"/><rect x="-2.6" y="-13" width="5.2" height="7" rx="1" fill="#f0d848" stroke="#6a5a10" stroke-width="0.7" transform="rotate(180)"/><rect x="-2.6" y="-13" width="5.2" height="7" rx="1" fill="#f0d848" stroke="#6a5a10" stroke-width="0.7" transform="rotate(225)"/><rect x="-2.6" y="-13" width="5.2" height="7" rx="1" fill="#f0d848" stroke="#6a5a10" stroke-width="0.7" transform="rotate(270)"/><rect x="-2.6" y="-13" width="5.2" height="7" rx="1" fill="#f0d848" stroke="#6a5a10" stroke-width="0.7" transform="rotate(315)"/><circle r="8" fill="#f0d848" stroke="#6a5a10" stroke-width="0.8"/><rect x="-3" y="-5" width="6" height="10" fill="#7a6a20"/><rect x="-1.5" y="-3.5" width="3" height="7" fill="#f8ecA0"/><path d="M17 10 L17 17 L10 17 Z" fill="#969696"/></svg>
<svg style="left:1063px;top:117px" width="40" height="40" viewBox="-20 -20 40 40"><path d="M-10 -12 H-4 M-10 -4 H-4 M-7 -12 V-4 M-10 3 H3 M3 3 V12 M3 12 H12 M12 12 V-3 M5 9.5 H10" fill="none" stroke="#e0e0e0" stroke-width="1.3"/><rect x="3" y="-14" width="4" height="4" fill="#333" stroke="#e6e6e6" stroke-width="1.3"/><rect x="1" y="1" width="4" height="4" fill="#333" stroke="#e6e6e6" stroke-width="1.3"/><rect x="10" y="-5" width="4" height="4" fill="#333" stroke="#e6e6e6" stroke-width="1.3"/><path d="M17 10 L17 17 L10 17 Z" fill="#969696"/></svg>
<svg style="left:1098px;top:117px" width="40" height="40" viewBox="-20 -20 40 40"><circle r="12" fill="url(#gGreen)" stroke="#041a02" stroke-width="1.2"/><path d="M-10 -2 C-6 -9 2 -10 6 -6 L0 -1 L5 4 C0 8 -6 8 -9 5 C-5 4 -4 1 -10 -2Z" fill="#0a1a08" fill-opacity="0.85"/><path d="M-9 -4 C-6 -9 -1 -10 3 -8 L-4 -2Z" fill="#e8ffe0" fill-opacity="0.7"/><path d="M17 10 L17 17 L10 17 Z" fill="#969696"/></svg>
<svg style="left:1133px;top:117px" width="40" height="40" viewBox="-20 -20 40 40"><circle r="12" fill="url(#gHelp)"/><text x="0" y="6.5" text-anchor="middle" font-family="Liberation Serif,serif" font-weight="700" font-size="20" fill="#fff">?</text><path d="M17 10 L17 17 L10 17 Z" fill="#969696"/></svg>
<svg style="left:1893px;top:98px" width="20" height="20" viewBox="-10 -10 20 20"><rect x="-1.7" y="-8" width="3.4" height="4" fill="#e0e0e0" transform="rotate(0)"/><rect x="-1.7" y="-8" width="3.4" height="4" fill="#e0e0e0" transform="rotate(45)"/><rect x="-1.7" y="-8" width="3.4" height="4" fill="#e0e0e0" transform="rotate(90)"/><rect x="-1.7" y="-8" width="3.4" height="4" fill="#e0e0e0" transform="rotate(135)"/><rect x="-1.7" y="-8" width="3.4" height="4" fill="#e0e0e0" transform="rotate(180)"/><rect x="-1.7" y="-8" width="3.4" height="4" fill="#e0e0e0" transform="rotate(225)"/><rect x="-1.7" y="-8" width="3.4" height="4" fill="#e0e0e0" transform="rotate(270)"/><rect x="-1.7" y="-8" width="3.4" height="4" fill="#e0e0e0" transform="rotate(315)"/><circle r="5.7" fill="#e0e0e0"/><circle r="2.2" fill="#3a3a3a"/></svg>
<svg style="left:126px;top:597px" width="20" height="20" viewBox="-10 -10 20 20"><rect x="-1.7" y="-7" width="3.4" height="4" fill="#c8c8c8" transform="rotate(0)"/><rect x="-1.7" y="-7" width="3.4" height="4" fill="#c8c8c8" transform="rotate(45)"/><rect x="-1.7" y="-7" width="3.4" height="4" fill="#c8c8c8" transform="rotate(90)"/><rect x="-1.7" y="-7" width="3.4" height="4" fill="#c8c8c8" transform="rotate(135)"/><rect x="-1.7" y="-7" width="3.4" height="4" fill="#c8c8c8" transform="rotate(180)"/><rect x="-1.7" y="-7" width="3.4" height="4" fill="#c8c8c8" transform="rotate(225)"/><rect x="-1.7" y="-7" width="3.4" height="4" fill="#c8c8c8" transform="rotate(270)"/><rect x="-1.7" y="-7" width="3.4" height="4" fill="#c8c8c8" transform="rotate(315)"/><circle r="4.7" fill="#c8c8c8"/><circle r="2.2" fill="#3a3a3a"/></svg>
<svg style="left:1894px;top:166px" width="20" height="20" viewBox="-10 -10 20 20"><rect x="-1.7" y="-7" width="3.4" height="4" fill="#c8c8c8" transform="rotate(0)"/><rect x="-1.7" y="-7" width="3.4" height="4" fill="#c8c8c8" transform="rotate(45)"/><rect x="-1.7" y="-7" width="3.4" height="4" fill="#c8c8c8" transform="rotate(90)"/><rect x="-1.7" y="-7" width="3.4" height="4" fill="#c8c8c8" transform="rotate(135)"/><rect x="-1.7" y="-7" width="3.4" height="4" fill="#c8c8c8" transform="rotate(180)"/><rect x="-1.7" y="-7" width="3.4" height="4" fill="#c8c8c8" transform="rotate(225)"/><rect x="-1.7" y="-7" width="3.4" height="4" fill="#c8c8c8" transform="rotate(270)"/><rect x="-1.7" y="-7" width="3.4" height="4" fill="#c8c8c8" transform="rotate(315)"/><circle r="4.7" fill="#c8c8c8"/><circle r="2.2" fill="#3a3a3a"/></svg>
<svg style="left:1898px;top:70px" width="20" height="22" viewBox="0 0 20 22"><rect x="0.5" y="0.5" width="17" height="9.5" fill="#222" stroke="#cfcfcf" stroke-width="1"/><rect x="0.5" y="11.5" width="17" height="9.5" fill="#222" stroke="#cfcfcf" stroke-width="1"/><path d="M5.5 7 L9 3.5 L12.5 7Z M5.5 14.5 L9 18 L12.5 14.5Z" fill="#e8e8e8"/><path d="M0 10.7 H20" stroke="#e8e8e8" stroke-width="1.4"/></svg>
<svg style="left:-1px;top:174px" width="40" height="40" viewBox="-20 -20 40 40"><path d="M-5 -11 L-5 6 L-1 2 L2 9 L5 8 L2 1 L7 1 Z" fill="#f4f4f4" stroke="#111" stroke-width="1.2"/></svg>
<svg style="left:34px;top:174px" width="40" height="40" viewBox="-20 -20 40 40"><circle cx="0" cy="-2" r="3.6" fill="#2a2a2a"/><circle cx="0" cy="-2" r="2" fill="#fff"/><path d="M18.5 10.5 L18.5 18.5 L10.5 18.5 Z" fill="#969696"/></svg>
<svg style="left:69px;top:174px" width="40" height="40" viewBox="-20 -20 40 40"><path d="M-7 8 L-2 -10 L9 3" fill="none" stroke="#e6e6e6" stroke-width="1.4" stroke-linejoin="round"/><rect x="-9" y="6" width="4" height="4" fill="#333" stroke="#e6e6e6" stroke-width="1.3"/><rect x="-4" y="-12" width="4" height="4" fill="#333" stroke="#e6e6e6" stroke-width="1.3"/><rect x="7" y="1" width="4" height="4" fill="#333" stroke="#e6e6e6" stroke-width="1.3"/><path d="M18.5 10.5 L18.5 18.5 L10.5 18.5 Z" fill="#969696"/></svg>
<svg style="left:104px;top:174px" width="40" height="40" viewBox="-20 -20 40 40"><path d="M-9 -9 H-2 C12 -9 12 8 -2 8 H-9" fill="none" stroke="#e6e6e6" stroke-width="1.4" stroke-linejoin="round"/><rect x="-11" y="-11" width="4" height="4" fill="#333" stroke="#e6e6e6" stroke-width="1.3"/><rect x="-11" y="4" width="4" height="4" fill="#333" stroke="#e6e6e6" stroke-width="1.3"/><rect x="6" y="-14" width="4" height="4" fill="#333" stroke="#e6e6e6" stroke-width="1.3"/><circle cx="10" cy="8" r="2" fill="#333" stroke="#e6e6e6" stroke-width="1.3"/><path d="M18.5 10.5 L18.5 18.5 L10.5 18.5 Z" fill="#969696"/></svg>
<svg style="left:-1px;top:209px" width="40" height="40" viewBox="-20 -20 40 40"><path d="M11 0 A11.5 11.5 0 1 1 -12 0 A11.5 11.5 0 1 1 11 0" fill="none" stroke="#e6e6e6" stroke-width="1.5" stroke-linejoin="round"/><rect x="-3" y="-3" width="4" height="4" fill="#333" stroke="#e6e6e6" stroke-width="1.3"/><rect x="5" y="-11" width="4" height="4" fill="#333" stroke="#e6e6e6" stroke-width="1.3"/><path d="M18.5 10.5 L18.5 18.5 L10.5 18.5 Z" fill="#969696"/></svg>
<svg style="left:34px;top:209px" width="40" height="40" viewBox="-20 -20 40 40"><ellipse cx="0" cy="1" rx="12" ry="9" fill="none" stroke="#e6e6e6" stroke-width="1.5"/><rect x="-2" y="-1" width="4" height="4" fill="#333" stroke="#e6e6e6" stroke-width="1.3"/><rect x="-2" y="-10" width="4" height="4" fill="#333" stroke="#e6e6e6" stroke-width="1.3"/><circle cx="11" cy="1" r="2" fill="#333" stroke="#e6e6e6" stroke-width="1.3"/><path d="M18.5 10.5 L18.5 18.5 L10.5 18.5 Z" fill="#969696"/></svg>
<svg style="left:69px;top:209px" width="40" height="40" viewBox="-20 -20 40 40"><path d="M-10 -10 C2 -10 8 -4 9 1 L-9 10 Z" fill="none" stroke="#e6e6e6" stroke-width="1.5" stroke-linejoin="round"/><rect x="-12" y="-12" width="4" height="4" fill="#333" stroke="#e6e6e6" stroke-width="1.3"/><rect x="7" y="-1" width="4" height="4" fill="#333" stroke="#e6e6e6" stroke-width="1.3"/><rect x="-11" y="8" width="4" height="4" fill="#333" stroke="#e6e6e6" stroke-width="1.3"/><path d="M18.5 10.5 L18.5 18.5 L10.5 18.5 Z" fill="#969696"/></svg>
<svg style="left:104px;top:209px" width="40" height="40" viewBox="-20 -20 40 40"><path d="M-11 -7 H11 V7 H-11 Z" fill="none" stroke="#e6e6e6" stroke-width="1.6" stroke-linejoin="round"/><rect x="9" y="-9" width="4" height="4" fill="#333" stroke="#e6e6e6" stroke-width="1.3"/><rect x="-13" y="5" width="4" height="4" fill="#333" stroke="#e6e6e6" stroke-width="1.3"/><path d="M18.5 10.5 L18.5 18.5 L10.5 18.5 Z" fill="#969696"/></svg>
<svg style="left:-1px;top:244px" width="40" height="40" viewBox="-20 -20 40 40"><path d="M-5 -9 H5 L10 0 L5 9 H-5 L-10 0 Z" fill="none" stroke="#e6e6e6" stroke-width="1.5" stroke-linejoin="round"/><rect x="-3" y="-2" width="4" height="4" fill="#333" stroke="#e6e6e6" stroke-width="1.3"/><circle cx="9" cy="0" r="2" fill="#333" stroke="#e6e6e6" stroke-width="1.3"/><path d="M18.5 10.5 L18.5 18.5 L10.5 18.5 Z" fill="#969696"/></svg>
<svg style="left:34px;top:244px" width="40" height="40" viewBox="-20 -20 40 40"><path d="M-11 -8 H-4 C6 -8 9 -2 9 10" fill="none" stroke="#e6e6e6" stroke-width="2" stroke-linejoin="round"/><path d="M4 -9 H10 V-2" fill="none" stroke="#777" stroke-width="1"/><rect x="-13" y="-10" width="4" height="4" fill="#333" stroke="#e6e6e6" stroke-width="1.3"/><circle cx="9" cy="10" r="2" fill="#333" stroke="#e6e6e6" stroke-width="1.3"/><path d="M18.5 10.5 L18.5 18.5 L10.5 18.5 Z" fill="#969696"/></svg>
<svg style="left:69px;top:244px" width="40" height="40" viewBox="-20 -20 40 40"><path d="M-5 -9 L9 -9 L6 5 L-1 11 L-9 4 Z" fill="url(#gB)" stroke="#1a1a50" stroke-width="1"/><path d="M-7 -2 L8 -2 M2 -9 L0 10" stroke="#c8d0ff" stroke-width="0.8" opacity="0.7"/><circle cx="-5" cy="-9" r="2" fill="#fff" stroke="#111" stroke-width="1"/><circle cx="9" cy="-9" r="2" fill="#fff" stroke="#111" stroke-width="1"/><circle cx="-10" cy="4" r="2" fill="#fff" stroke="#111" stroke-width="1"/><circle cx="3" cy="10" r="2" fill="#fff" stroke="#111" stroke-width="1"/><path d="M18.5 10.5 L18.5 18.5 L10.5 18.5 Z" fill="#969696"/></svg>
<svg style="left:104px;top:244px" width="40" height="40" viewBox="-20 -20 40 40"><path d="M-12 -5 L-3 -11 L8 -6 C12 -2 12 4 10 7 L0 12 C2 6 0 0 -3 -2 Z" fill="url(#gB)" stroke="#111" stroke-width="1.2"/><path d="M-12 -5 L-3 -11 L8 -6 L-3 -2Z" fill="#f0f0ff" stroke="#111" stroke-width="1"/><path d="M0 12 L10 7 L10 3 L0 8Z" fill="#e8e8ff"/><path d="M18.5 10.5 L18.5 18.5 L10.5 18.5 Z" fill="#969696"/></svg>
<svg style="left:-1px;top:279px" width="40" height="40" viewBox="-20 -20 40 40"><path d="M-11 -5 L-2 -12 L11 -8 V5 L2 12 L-11 6Z" fill="url(#gB2)" stroke="#181850" stroke-width="1.2"/><path d="M-11 -5 L-2 -12 L11 -8 L2 -2Z" fill="#b8c4ff"/><path d="M2 -2 V12 M2 -2 L-11 -5 M2 -2 L11 -8" stroke="#28307a" stroke-width="0.9" fill="none"/><path d="M18.5 10.5 L18.5 18.5 L10.5 18.5 Z" fill="#969696"/></svg>
<svg style="left:34px;top:279px" width="40" height="40" viewBox="-20 -20 40 40"><circle cx="4" cy="-5" r="8" fill="url(#gBS)" stroke="#181850" stroke-width="1.2"/><circle cx="-4" cy="4" r="8.5" fill="url(#gBS)" stroke="#181850" stroke-width="1.2"/><path d="M-12 4 C-6 7 0 7 4.5 4 M-4 -4.5 C-6 0 -6 8 -4 12.5" stroke="#e0e4ff" stroke-width="0.8" fill="none" opacity="0.7"/><path d="M18.5 10.5 L18.5 18.5 L10.5 18.5 Z" fill="#969696"/></svg>
<svg style="left:69px;top:279px" width="40" height="40" viewBox="-20 -20 40 40"><ellipse cx="0" cy="-9" rx="7" ry="3" fill="none" stroke="#6a6a6a" stroke-width="2"/><path d="M-13 -3 C-6 1 6 1 13 -3 V7 C6 13 -6 13 -13 7Z" fill="url(#gB2)" stroke="#181850" stroke-width="1.2"/><path d="M-11 -1 C-5 3 5 3 11 -1 V6 C5 11 -5 11 -11 6Z" fill="#8ab0f0"/><ellipse cx="0" cy="6" rx="6" ry="2.6" fill="#e8f0ff"/><path d="M18.5 10.5 L18.5 18.5 L10.5 18.5 Z" fill="#969696"/></svg>
<svg style="left:104px;top:279px" width="40" height="40" viewBox="-20 -20 40 40"><path d="M-13 2 L-3 -11 L13 -6 L4 10Z" fill="url(#gB2)" stroke="#181850" stroke-width="1.2"/><path d="M-8 -4.5 L8.5 2 M-5 -8 L3 7 M4 -9 L-5 6" stroke="#c8d4ff" stroke-width="1.4" fill="none"/><path d="M-13 2 L4 10 L4 12 L-13 4Z" fill="#28307a"/><path d="M18.5 10.5 L18.5 18.5 L10.5 18.5 Z" fill="#969696"/></svg>
<svg style="left:-1px;top:314px" width="40" height="40" viewBox="-20 -20 40 40"><path d="M-5 -14.5 L-2.45 -8.55 L3.5 -7.7 L-1.1749999999999998 -3.875 L0.9499999999999993 2.5 L-5 -1.75 L-10.95 2.5 L-8.825 -3.875 L-13.5 -7.7 L-7.55 -8.55Z" fill="#f59a1c" stroke="#7a3000" stroke-width="0.9"/><path d="M4 -6 L6.699999999999999 0.30000000000000027 L13 1.2 L8.05 5.25 L10.3 12 L4 7.5 L-2.3 12 L-0.04999999999999982 5.25 L-5 1.2 L1.3000000000000003 0.30000000000000027Z" fill="#ffffff" stroke="#222" stroke-width="0.9"/><path d="M18.5 10.5 L18.5 18.5 L10.5 18.5 Z" fill="#969696"/></svg>
<svg style="left:34px;top:314px" width="40" height="40" viewBox="-20 -20 40 40"><path d="M-12 12 L-10 -2 L-7 3 L-4 -12 L0 1 L8 -11 L6 2 L13 4 L5 8 L9 12Z" fill="url(#gFire)" stroke="#5a1a00" stroke-width="0.9"/><path d="M-7 11 L-5 2 L-2 6 L2 -2 L3 7 L7 6 L3 11Z" fill="#ffe050"/></svg>
<svg style="left:69px;top:314px" width="40" height="40" viewBox="-20 -20 40 40"><rect x="-12" y="-1" width="12" height="5" fill="#fff" stroke="#222" stroke-width="1"/><path d="M-13 1.5 H-16 M-13 -1 V4" stroke="#ccc" stroke-width="0.8"/><rect x="2" y="-12" width="6" height="11" fill="#2030c8" stroke="#0a0a40" stroke-width="0.8"/><path d="M2 2 L8 -2 L13 4 L7 10 Z M4 3 L10 7" fill="none" stroke="#b0b0b0" stroke-width="1.2"/></svg>
<svg style="left:104px;top:314px" width="40" height="40" viewBox="-20 -20 40 40"><rect x="-11" y="2" width="9" height="5" fill="#fff" stroke="#222" stroke-width="0.8"/><rect x="1" y="2" width="9" height="5" fill="#fff" stroke="#222" stroke-width="0.8"/><rect x="-1" y="-9" width="4" height="11" fill="#2030c8"/><rect x="5" y="-9" width="3" height="11" fill="#28308a"/><path d="M-11 9 H10" stroke="#999" stroke-width="1" stroke-dasharray="1.5 1.5"/></svg>
<svg style="left:-1px;top:349px" width="40" height="40" viewBox="-20 -20 40 40"><circle cx="0" cy="-5" r="6.5" fill="#0a0a0a"/><circle cx="5" cy="3" r="6.5" fill="#0a0a0a"/><circle cx="-5" cy="3" r="6.5" fill="#0a0a0a"/><circle cx="0" cy="-5" r="4.6" fill="#7a8cf0"/><circle cx="5" cy="3" r="4.6" fill="#202880"/><circle cx="-5" cy="3" r="4.6" fill="#f8f8f8"/><path d="M18.5 10.5 L18.5 18.5 L10.5 18.5 Z" fill="#969696"/></svg>
<svg style="left:34px;top:349px" width="40" height="40" viewBox="-20 -20 40 40"><circle cx="1" cy="-7" r="4.8" fill="#6a78d8" stroke="#222a70" stroke-width="1.2"/><circle cx="7" cy="4" r="5" fill="#1c2268" stroke="#3a3a6a" stroke-width="1.2"/><circle cx="-6" cy="4" r="4.6" fill="#f4f4f4" stroke="#222" stroke-width="1.4"/></svg>
<svg style="left:69px;top:349px" width="40" height="40" viewBox="-20 -20 40 40"><path d="M-10 -7 C2 -8 9 0 9 11" fill="none" stroke="#f0f0f0" stroke-width="2.6"/><rect x="-6.6" y="-9.6" width="3.2" height="3.2" fill="#333" stroke="#e6e6e6" stroke-width="1.3"/><rect x="6.4" y="2.4" width="3.2" height="3.2" fill="#333" stroke="#e6e6e6" stroke-width="1.3"/></svg>
<svg style="left:104px;top:349px" width="40" height="40" viewBox="-20 -20 40 40"><path d="M-11 -6 C2 -8 10 0 10 12" fill="none" stroke="#f0f0f0" stroke-width="2.6"/><path d="M-12 -12 H-6" stroke="#aaa" stroke-width="1" stroke-dasharray="1.5 1.5"/><rect x="-2" y="-14" width="4" height="4" fill="#333" stroke="#e6e6e6" stroke-width="1.3"/><rect x="12" y="0" width="4" height="4" fill="#333" stroke="#e6e6e6" stroke-width="1.3"/><path d="M18.5 10.5 L18.5 18.5 L10.5 18.5 Z" fill="#969696"/></svg>
<svg style="left:-1px;top:384px" width="40" height="40" viewBox="-20 -20 40 40"><path d="M-12 -11 H12 V-5 H9 L8 -8 H4 V8 L7 9 V12 H-7 V9 L-4 8 V-8 H-8 L-9 -5 H-12Z" fill="url(#gB)" stroke="#10104a" stroke-width="1.3"/><path d="M-12 -11 H12 V-9 H-12Z" fill="#d8e0ff"/></svg>
<svg style="left:34px;top:384px" width="40" height="40" viewBox="-20 -20 40 40"><rect x="-11" y="2" width="8" height="8" fill="#fff" stroke="#555" stroke-width="1"/><rect x="4" y="-11" width="8" height="8" fill="#98a4f4" stroke="#555" stroke-width="1"/><rect x="6.5" y="-8.5" width="3" height="3" fill="#e0e4ff"/><path d="M-5 1 L3 -5" stroke="#888" stroke-width="1" stroke-dasharray="2 1.5"/><path d="M18.5 10.5 L18.5 18.5 L10.5 18.5 Z" fill="#969696"/></svg>
<svg style="left:69px;top:384px" width="40" height="40" viewBox="-20 -20 40 40"><rect x="-10" y="-12" width="7" height="7" fill="#98a4f4" stroke="#5a5a6a" stroke-width="1"/><rect x="4" y="-10" width="7" height="7" fill="#8090f0" stroke="#5a5a6a" stroke-width="1"/><rect x="-1" y="-4" width="7" height="7" fill="#a8b4ff" stroke="#5a5a6a" stroke-width="1"/><rect x="-10" y="2" width="7" height="7" fill="#f8f0f0" stroke="#5a5a6a" stroke-width="1"/><rect x="5" y="4" width="7" height="7" fill="#98a4f4" stroke="#5a5a6a" stroke-width="1"/></svg>
<svg style="left:104px;top:384px" width="40" height="40" viewBox="-20 -20 40 40"><rect x="-11" y="-12" width="6" height="17" fill="url(#gW)" stroke="#333" stroke-width="1"/><path d="M1 6 L10 -5 L14 -1 L5 10Z" fill="url(#gB)" stroke="#10104a" stroke-width="1"/><path d="M-3 -10 L7 -7 L8 -3" fill="none" stroke="#888" stroke-width="1"/></svg>
<svg style="left:-1px;top:419px" width="40" height="40" viewBox="-20 -20 40 40"><path d="M-11 -6 L-1 -12 L11 -7 V6 L0 12 L-11 6Z" fill="url(#gB2)" stroke="#10104a" stroke-width="1.2"/><path d="M-11 -6 L-1 -12 L11 -7 L0 -2Z" fill="#b8c8ff"/><path d="M-4 2 L4 0 V8 L-4 10Z" fill="#fff" stroke="#333" stroke-width="0.7"/><path d="M0 -2 V12" stroke="#28307a" stroke-width="0.9"/><path d="M18.5 10.5 L18.5 18.5 L10.5 18.5 Z" fill="#969696"/></svg>
<svg style="left:34px;top:419px" width="40" height="40" viewBox="-20 -20 40 40"><path d="M-12 8 L-8 4 H10 L14 8Z" fill="#4450c0" stroke="#111" stroke-width="1"/><path d="M-6 5 V-6 M-9 -5 L-6 -11 L-3 -5Z" stroke="#fff" stroke-width="2" fill="#fff"/><path d="M1 5 V-6 M-2 -5 L1 -11 L4 -5Z" stroke="#fff" stroke-width="2" fill="#fff"/><path d="M8 5 V-6 M5 -5 L8 -11 L11 -5Z" stroke="#fff" stroke-width="2" fill="#fff"/><path d="M18.5 10.5 L18.5 18.5 L10.5 18.5 Z" fill="#969696"/></svg>
<svg style="left:69px;top:419px" width="40" height="40" viewBox="-20 -20 40 40"><rect x="-12" y="-12" width="24" height="24" fill="#3c3c50"/><path d="M-12 -4 H12 M-12 4 H12 M-4 -12 V12 M4 -12 V12 M-12 -12 H12 V12 H-12Z" stroke="#8a8a9a" stroke-width="1" fill="none"/><circle cx="-8" cy="-8" r="2" fill="#a8a8f0"/><circle cx="-8" cy="0" r="2" fill="#a8a8f0"/><circle cx="-8" cy="8" r="2" fill="#f4f4f4"/><circle cx="0" cy="-8" r="2" fill="#a8a8f0"/><circle cx="0" cy="0" r="2" fill="#a8a8f0"/><circle cx="0" cy="8" r="2" fill="#a8a8f0"/><circle cx="8" cy="-8" r="2" fill="#a8a8f0"/><circle cx="8" cy="0" r="2" fill="#a8a8f0"/><circle cx="8" cy="8" r="2" fill="#a8a8f0"/><path d="M18.5 10.5 L18.5 18.5 L10.5 18.5 Z" fill="#969696"/></svg>
<svg style="left:104px;top:419px" width="40" height="40" viewBox="-20 -20 40 40"><rect x="-6" y="-13" width="12" height="26" fill="#3a1010" stroke="#701818" stroke-width="1"/><rect x="-4.5" y="-10" width="3.6" height="5" fill="#ff9a9a"/><rect x="-4.5" y="-2.5" width="3.6" height="5" fill="#ff9a9a"/><rect x="-4.5" y="5" width="3.6" height="5" fill="#ff9a9a"/><rect x="1" y="-10" width="3.6" height="5" fill="#ff9a9a"/><rect x="1" y="-2.5" width="3.6" height="5" fill="#ff9a9a"/><rect x="1" y="5" width="3.6" height="5" fill="#ff9a9a"/><path d="M0 -13 V13" stroke="#e03030" stroke-width="1"/><path d="M18.5 10.5 L18.5 18.5 L10.5 18.5 Z" fill="#969696"/></svg>
<svg style="left:-1px;top:454px" width="40" height="40" viewBox="-20 -20 40 40"><path d="M-10 -6 L-3 -9 L-3 8 L-10 11Z" fill="#f4f4f4" stroke="#111" stroke-width="1"/><path d="M-3 -9 L2 -7 V9 L-3 8Z" fill="#c8c8c8" stroke="#111" stroke-width="0.8"/><path d="M4 -8 L11 -5 L4 12 L-3 9Z" fill="url(#gB)" stroke="#10104a" stroke-width="1.2"/><path d="M0 -13 V-6" stroke="#ddd" stroke-width="1.5"/><path d="M18.5 10.5 L18.5 18.5 L10.5 18.5 Z" fill="#969696"/></svg>
<svg style="left:34px;top:454px" width="40" height="40" viewBox="-20 -20 40 40"><path d="M0 -13 V13" stroke="#d8d8f0" stroke-width="2"/><path d="M0 -13 V13" stroke="#4048c0" stroke-width="0.8"/><path d="M-10 -8 a3 3 0 1 1 0.1 0 M-10 -5 V4 L-13 11 M-10 4 L-6 11 M-13 -2 H-5" stroke="#555" stroke-width="2" fill="none"/><path d="M10 -8 a3 3 0 1 1 0.1 0 M10 -5 V4 L13 11 M10 4 L6 11 M13 -2 H5" stroke="#555" stroke-width="2" fill="none"/><path d="M18.5 10.5 L18.5 18.5 L10.5 18.5 Z" fill="#969696"/></svg>
<svg style="left:69px;top:454px" width="40" height="40" viewBox="-20 -20 40 40"><path d="M-10 2 L-3 9 L11 -10" fill="none" stroke="#fafafa" stroke-width="3.2"/><path d="M18.5 10.5 L18.5 18.5 L10.5 18.5 Z" fill="#969696"/></svg>
<svg style="left:104px;top:454px" width="40" height="40" viewBox="-20 -20 40 40"><path d="M-12 -6 L-5 -10 L2 -7 V3 L-5 7 L-12 3Z" fill="#e0e0e0" stroke="#444" stroke-width="1"/><path d="M-12 -6 L-5 -3 L2 -7 M-5 -3 V7" stroke="#666" stroke-width="0.9" fill="none"/><path d="M6 -9 L13 8 C10 11 2 11 -1 8Z" fill="url(#gSph)" stroke="#444" stroke-width="1"/><path d="M18.5 10.5 L18.5 18.5 L10.5 18.5 Z" fill="#969696"/></svg>
<svg style="left:-1px;top:489px" width="40" height="40" viewBox="-20 -20 40 40"><path d="M-4 -12 C2 -15 8 -13 10 -9 C6 -11 2 -10 -2 -8Z" fill="#f0f0f0" stroke="#222" stroke-width="0.8"/><path d="M-6 -9 L8 -5" stroke="#999" stroke-width="1" stroke-dasharray="1.5 1.5"/><path d="M-13 6 L-1 -6 L9 4 L-2 11Z" fill="url(#gY)" stroke="#5a4200" stroke-width="1"/><path d="M-13 6 L-2 11 L9 4 L-2 13Z" fill="#a87a10"/><path d="M18.5 10.5 L18.5 18.5 L10.5 18.5 Z" fill="#969696"/></svg>
<svg style="left:12px;top:621px" width="24" height="22" viewBox="-12 -11 24 22"><circle cx="-1" cy="0" r="8" fill="none" stroke="#e0e0e0" stroke-width="1.5"/><rect x="-3.5" y="-1.8" width="3.6" height="3.6" fill="#e0e0e0"/><path d="M0 0 H10 M7.5 -2 L10 0 L7.5 2" stroke="#e0e0e0" stroke-width="1.3" fill="none"/></svg>
<svg style="left:57px;top:621px" width="24" height="22" viewBox="-12 -11 24 22"><path d="M-7 -7 H7 L2 0 V8 H-2 V0Z" fill="#e8e8e8"/><path d="M6 -9 L9 -8 M-9 5 L-8 8" stroke="#c8c8c8" stroke-width="1.2"/></svg>
<svg style="left:1669px;top:198px" width="24" height="24" viewBox="-12 -12 24 24"><path d="M-9 -2 L-5 -8 L8 -5 L8 1 L0 8 L-9 3Z" fill="#f0f0f0" stroke="#333" stroke-width="0.8"/><path d="M-9 -5 L-5 -8 L8 -5 L0 0Z" fill="#ff6a3a"/><path d="M-9 -5 L0 0 L8 -5 V-2 L0 3 L-9 -2Z" fill="#e02810"/><circle cx="6" cy="6" r="4.5" fill="#fff" stroke="#111" stroke-width="1"/><path d="M6 3 V9 M3 6 H9" stroke="#111" stroke-width="1.6"/></svg>
<svg style="left:1696px;top:198px" width="24" height="24" viewBox="-12 -12 24 24"><path d="M-8 -8 L-3 -10 L2 -8 V-3 L-3 -1 L-8 -3Z M-2 1 L4 -2 L9 0 V6 L4 9 L-2 6Z M-6 0 V5 H-3" fill="none" stroke="#7c7c7c" stroke-width="1.6"/></svg>
<svg style="left:1724px;top:198px" width="24" height="24" viewBox="-12 -12 24 24"><path d="M-7 -7 L7 7 M7 -7 L-7 7" stroke="#7c7c7c" stroke-width="3.4" stroke-linecap="round"/><path d="M-7 -7 L7 7 M7 -7 L-7 7" stroke="#4a4a4a" stroke-width="1"/></svg>
<svg style="left:1751px;top:198px" width="24" height="24" viewBox="-12 -12 24 24"><circle cx="0" cy="0" r="8.5" fill="none" stroke="#7c7c7c" stroke-width="1.6"/><path d="M-4 -4 H3 V4 H-4Z M0 -1 H6 V6 H0Z" fill="#555" stroke="#7c7c7c" stroke-width="1.2"/></svg>
<svg style="left:1779px;top:198px" width="24" height="24" viewBox="-12 -12 24 24"><path d="M-8 4 L0 -5 L8 4Z" fill="#555" stroke="#7c7c7c" stroke-width="1.6" stroke-linejoin="round"/></svg>
<svg style="left:1806px;top:198px" width="24" height="24" viewBox="-12 -12 24 24"><path d="M-8 -4 L0 5 L8 -4Z" fill="#555" stroke="#7c7c7c" stroke-width="1.6" stroke-linejoin="round"/></svg>
<svg style="left:1833px;top:198px" width="24" height="24" viewBox="-12 -12 24 24"><path d="M4 -8 L-5 0 L4 8Z" fill="#555" stroke="#7c7c7c" stroke-width="1.6" stroke-linejoin="round"/><path d="M6 -9 V9" stroke="#7c7c7c" stroke-width="1.4"/></svg>
<svg style="left:1861px;top:198px" width="24" height="24" viewBox="-12 -12 24 24"><path d="M-8 -8 H8 L2 -1 V9 H-2 V-1Z" fill="#3a6ae0" stroke="#a8c0ff" stroke-width="0.8"/></svg>
<svg style="left:1668px;top:227px" width="24" height="24" viewBox="-12 -12 24 24"><rect x="-7.5" y="-8" width="3.6" height="3.6" fill="#e8e8e8"/><rect x="-7.5" y="-3.1" width="3.6" height="3.6" fill="#e8e8e8"/><rect x="-7.5" y="1.8" width="3.6" height="3.6" fill="#e8e8e8"/><rect x="-7.5" y="6.7" width="3.6" height="3.6" fill="#e8e8e8"/><rect x="-2.6" y="-8" width="3.6" height="3.6" fill="#e8e8e8"/><rect x="-2.6" y="-3.1" width="3.6" height="3.6" fill="#e8e8e8"/><rect x="-2.6" y="1.8" width="3.6" height="3.6" fill="#e8e8e8"/><rect x="-2.6" y="6.7" width="3.6" height="3.6" fill="#e8e8e8"/><rect x="2.3" y="-8" width="3.6" height="3.6" fill="#e8e8e8"/><rect x="2.3" y="-3.1" width="3.6" height="3.6" fill="#e8e8e8"/><rect x="2.3" y="1.8" width="3.6" height="3.6" fill="#e8e8e8"/><rect x="2.3" y="6.7" width="3.6" height="3.6" fill="#e8e8e8"/></svg>
<svg style="left:1696px;top:227px" width="24" height="24" viewBox="-12 -12 24 24"><path d="M-7 -5.5 H7 M-7 0 H7 M-7 5.5 H7" stroke="#e8e8e8" stroke-width="2.2"/></svg>
<svg style="left:1724px;top:227px" width="24" height="24" viewBox="-12 -12 24 24"><circle r="9" fill="url(#gHelp)"/><text x="0" y="5.5" text-anchor="middle" font-family="Liberation Serif,serif" font-weight="700" font-size="16" fill="#fff">?</text></svg>
<svg style="left:1892px;top:199px" width="24" height="24" viewBox="-12 -12 24 24"><path d="M-9 -1 L-5 -8 L9 -5 L9 2 L0 9 L-9 4Z" fill="#f0f0f0"/><path d="M-9 -4 L-5 -8 L9 -5 L0 0Z" fill="#ff6a3a"/><path d="M-9 -4 L0 0 L9 -5 V-2 L0 3 L-9 -1Z" fill="#e02810"/><path d="M-9 2 L0 6 L9 0 V2 L0 9 L-9 4Z" fill="#2a48c8"/></svg>
<svg style="left:1892px;top:245px" width="24" height="24" viewBox="-12 -12 24 24"><circle r="6.5" fill="none" stroke="#e02020" stroke-width="4"/><circle r="6.5" fill="none" stroke="#f0d820" stroke-width="4" stroke-dasharray="6.8 34" stroke-dashoffset="0"/><circle r="6.5" fill="none" stroke="#30d030" stroke-width="4" stroke-dasharray="6.8 34" stroke-dashoffset="-6.8"/><circle r="6.5" fill="none" stroke="#20d0d0" stroke-width="4" stroke-dasharray="6.8 34" stroke-dashoffset="-13.6"/><circle r="6.5" fill="none" stroke="#3040e8" stroke-width="4" stroke-dasharray="6.8 34" stroke-dashoffset="-20.4"/><circle r="6.5" fill="none" stroke="#d020d0" stroke-width="4" stroke-dasharray="6.8 34" stroke-dashoffset="-27.2"/></svg>
<svg style="left:1892px;top:288px" width="24" height="24" viewBox="-12 -12 24 24"><rect x="-8" y="-7" width="16" height="11" fill="#e8e8e8" stroke="#888" stroke-width="0.8"/><path d="M-8 -3.5 H8 M-8 0 H8 M-4 -7 V4 M0 -7 V4 M4 -7 V4" stroke="#aaa" stroke-width="0.6"/><rect x="-5" y="4" width="10" height="3" fill="#0a0a0a"/></svg>
<svg style="left:1892px;top:335px" width="24" height="24" viewBox="-12 -12 24 24"><rect x="-8" y="-8" width="16" height="16" fill="#3a58d8" stroke="#a8b8ff" stroke-width="0.8"/><rect x="-8" y="-8" width="16" height="3" fill="#d8e0ff"/><circle cx="0" cy="1.5" r="5.5" fill="#7088f0"/><text x="0" y="5.5" text-anchor="middle" font-family="Liberation Serif,serif" font-weight="700" font-size="11" fill="#fff">?</text></svg>
<svg style="left:152px;top:165px;overflow:hidden" width="1512" height="829" viewBox="0 0 1512 829"><path d="M-1915.3 -300.7L330039.4 60092.4M-1431.3 -372.5L18071.8 2241.0M-952.3 953.5L1137.7 -512.4M-2585.1 -201.3L566.2 691.6M73.3 1430.2L566.2 691.6" stroke="#868d98" stroke-width="1" fill="none"/><path d="M566.2 691.6L1166.1 861.5" stroke="#a24e5a" stroke-width="1.4" fill="none"/><path d="M566.2 691.6L1361.9 -500.8" stroke="#6c9652" stroke-width="1.1" fill="none"/><path d="M566.2 691.6L703.3 570.7M663.8 719.2L606.1 546.0M611.2 624.2L660.3 639.2M705.1 649.4L559.2 612.0M559.2 612.0L701.4 486.0M660.3 639.2L600.6 462.0M606.1 546.0L656.6 552.9M703.3 570.7L551.7 526.4M551.7 526.4L699.3 394.9M656.6 552.9L594.8 371.7M600.6 462.0L652.6 459.6M701.4 486.0L543.6 433.9M543.6 433.9L697.0 296.4M652.6 459.6L588.4 274.2M594.8 371.7L648.2 358.4M699.3 394.9L534.7 333.7M611.2 624.2L742.4 508.3M705.1 649.4L648.8 485.7M652.3 562.6L703.3 570.7M742.8 585.7L606.1 546.0M606.1 546.0L741.9 425.4M703.3 570.7L645.1 403.5M648.8 485.7L701.4 486.0M742.4 508.3L600.6 462.0M600.6 462.0L741.4 336.4M701.4 486.0L641.1 315.3M645.1 403.5L699.3 394.9M741.9 425.4L594.8 371.7M594.8 371.7L740.9 240.6M699.3 394.9L636.8 220.5M641.1 315.3L697.0 296.4M741.4 336.4L588.4 274.2M652.3 562.6L778.1 451.3M742.8 585.7L687.9 430.6M690.0 506.1L742.4 508.3M777.4 527.3L648.8 485.7M648.8 485.7L778.9 370.1M742.4 508.3L685.7 350.1M687.9 430.6L741.9 425.4M778.1 451.3L645.1 403.5M645.1 403.5L779.7 283.3M741.9 425.4L683.3 264.1M685.7 350.1L741.4 336.4M778.9 370.1L641.1 315.3M641.1 315.3L780.6 190.1M741.4 336.4L680.7 171.9M683.3 264.1L740.9 240.6M779.7 283.3L636.8 220.5M690.0 506.1L810.9 399.0M777.4 527.3L723.9 379.9M724.8 453.9L778.1 451.3M809.2 473.5L687.9 430.6M687.9 430.6L812.7 319.6M778.1 451.3L722.9 301.2M723.9 379.9L778.9 370.1M810.9 399.0L685.7 350.1M685.7 350.1L814.6 234.8M778.9 370.1L721.8 217.3M722.9 301.2L779.7 283.3M812.7 319.6L683.3 264.1M683.3 264.1L816.7 144.2M779.7 283.3L720.6 127.6M721.8 217.3L780.6 190.1M814.6 234.8L680.7 171.9M724.8 453.9L841.1 350.8M809.2 473.5L757.0 333.2M757.0 405.8L810.9 399.0M838.6 423.9L723.9 379.9M723.9 379.9L843.8 273.1M810.9 399.0L757.0 256.2M757.0 333.2L812.7 319.6M841.1 350.8L722.9 301.2M722.9 301.2L846.6 190.5M812.7 319.6L757.1 174.3M757.0 256.2L814.6 234.8M843.8 273.1L721.8 217.3M721.8 217.3L849.6 102.3M814.6 234.8L757.1 87.1M757.1 174.3L816.7 144.2M846.6 190.5L720.6 127.6M663.8 719.2L804.1 596.3M765.0 747.9L703.3 570.7M705.1 649.4L765.4 667.4M802.4 675.5L660.3 639.2M660.3 639.2L805.9 511.0M765.4 667.4L701.4 486.0M703.3 570.7L765.8 580.5M804.1 596.3L656.6 552.9M656.6 552.9L807.9 419.0M765.8 580.5L699.3 394.9M701.4 486.0L766.2 486.4M805.9 511.0L652.6 459.6M652.6 459.6L810.1 319.4M766.2 486.4L697.0 296.4M699.3 394.9L766.6 384.1M807.9 419.0L648.2 358.4M705.1 649.4L839.3 531.6M802.4 675.5L742.4 508.3M742.8 585.7L804.1 596.3M836.4 609.6L703.3 570.7M703.3 570.7L842.3 448.1M804.1 596.3L741.9 425.4M742.4 508.3L805.9 511.0M839.3 531.6L701.4 486.0M701.4 486.0L845.5 358.2M805.9 511.0L741.4 336.4M741.9 425.4L807.9 419.0M842.3 448.1L699.3 394.9M699.3 394.9L849.0 261.4M807.9 419.0L740.9 240.6M741.4 336.4L810.1 319.4M845.5 358.2L697.0 296.4M742.8 585.7L871.4 472.6M836.4 609.6L778.1 451.3M777.4 527.3L839.3 531.6M867.6 549.2L742.4 508.3M742.4 508.3L875.4 390.8M839.3 531.6L778.9 370.1M778.1 451.3L842.3 448.1M871.4 472.6L741.9 425.4M741.9 425.4L879.6 303.1M842.3 448.1L779.7 283.3M778.9 370.1L845.5 358.2M875.4 390.8L741.4 336.4M741.4 336.4L884.2 208.9M845.5 358.2L780.6 190.1M779.7 283.3L849.0 261.4M879.6 303.1L740.9 240.6M777.4 527.3L900.8 418.6M867.6 549.2L810.9 399.0M809.2 473.5L871.4 472.6M896.3 493.7L778.1 451.3M778.1 451.3L905.6 338.5M871.4 472.6L812.7 319.6M810.9 399.0L875.4 390.8M900.8 418.6L778.9 370.1M778.9 370.1L910.7 253.0M875.4 390.8L814.6 234.8M812.7 319.6L879.6 303.1M905.6 338.5L779.7 283.3M779.7 283.3L916.2 161.4M879.6 303.1L816.7 144.2M814.6 234.8L884.2 208.9M910.7 253.0L780.6 190.1M809.2 473.5L927.8 368.9M896.3 493.7L841.1 350.8M838.6 423.9L900.8 418.6M922.7 442.5L810.9 399.0M810.9 399.0L933.3 290.5M900.8 418.6L843.8 273.1M841.1 350.8L905.6 338.5M927.8 368.9L812.7 319.6M812.7 319.6L939.1 207.1M905.6 338.5L846.6 190.5M843.8 273.1L910.7 253.0M933.3 290.5L814.6 234.8M814.6 234.8L945.3 118.0M910.7 253.0L849.6 102.3M846.6 190.5L916.2 161.4M939.1 207.1L816.7 144.2M765.0 747.9L908.7 622.9M870.1 777.7L804.1 596.3M802.4 675.5L874.5 696.8M903.2 702.6L765.4 667.4M765.4 667.4L914.6 537.0M874.5 696.8L805.9 511.0M804.1 596.3L879.4 609.3M908.7 622.9L765.8 580.5M765.8 580.5L921.0 444.1M879.4 609.3L807.9 419.0M805.9 511.0L884.6 514.4M914.6 537.0L766.2 486.4M766.2 486.4L927.9 343.5M884.6 514.4L810.1 319.4M807.9 419.0L890.4 411.0M921.0 444.1L766.6 384.1M802.4 675.5L939.6 555.8M903.2 702.6L839.3 531.6M836.4 609.6L908.7 622.9M933.3 634.3L804.1 596.3M804.1 596.3L946.4 471.6M908.7 622.9L842.3 448.1M839.3 531.6L914.6 537.0M939.6 555.8L805.9 511.0M805.9 511.0L953.7 380.9M914.6 537.0L845.5 358.2M842.3 448.1L921.0 444.1M946.4 471.6L807.9 419.0M807.9 419.0L961.5 283.0M921.0 444.1L849.0 261.4M845.5 358.2L927.9 343.5M953.7 380.9L810.1 319.4M836.4 609.6L967.8 494.7M933.3 634.3L871.4 472.6M867.6 549.2L939.6 555.8M960.8 571.8L839.3 531.6M839.3 531.6L975.2 412.2M939.6 555.8L875.4 390.8M871.4 472.6L946.4 471.6M967.8 494.7L842.3 448.1M842.3 448.1L983.2 323.7M946.4 471.6L879.6 303.1M875.4 390.8L953.7 380.9M975.2 412.2L845.5 358.2M845.5 358.2L991.8 228.5M953.7 380.9L884.2 208.9M879.6 303.1L961.5 283.0M983.2 323.7L849.0 261.4M867.6 549.2L993.6 438.9M960.8 571.8L900.8 418.6M896.3 493.7L967.8 494.7M986.1 514.5L871.4 472.6M871.4 472.6L1001.6 358.1M967.8 494.7L905.6 338.5M900.8 418.6L975.2 412.2M993.6 438.9L875.4 390.8M875.4 390.8L1010.1 271.7M975.2 412.2L910.7 253.0M905.6 338.5L983.2 323.7M1001.6 358.1L879.6 303.1M879.6 303.1L1019.3 179.2M983.2 323.7L916.2 161.4M910.7 253.0L991.8 228.5M1010.1 271.7L884.2 208.9M896.3 493.7L1017.3 387.5M986.1 514.5L927.8 368.9M922.7 442.5L993.6 438.9M1009.4 461.8L900.8 418.6M900.8 418.6L1025.7 308.5M993.6 438.9L933.3 290.5M927.8 368.9L1001.6 358.1M1017.3 387.5L905.6 338.5M905.6 338.5L1034.7 224.3M1001.6 358.1L939.1 207.1M933.3 290.5L1010.1 271.7M1025.7 308.5L910.7 253.0M910.7 253.0L1044.3 134.2M1010.1 271.7L945.3 118.0M939.1 207.1L1019.3 179.2M1034.7 224.3L916.2 161.4M870.1 777.7L1017.2 650.4M979.2 808.6L908.7 622.9M903.2 702.6L988.1 727.3M1007.6 730.6L874.5 696.8M874.5 696.8L1027.5 563.9M988.1 727.3L914.6 537.0M908.7 622.9L997.8 639.3M1017.2 650.4L879.4 609.3M879.4 609.3L1038.7 470.3M997.8 639.3L921.0 444.1M914.6 537.0L1008.3 543.6M1027.5 563.9L884.6 514.4M884.6 514.4L1050.9 368.6M1008.3 543.6L927.9 343.5M921.0 444.1L1019.8 439.2M1038.7 470.3L890.4 411.0M903.2 702.6L1043.6 580.9M1007.6 730.6L939.6 555.8M933.3 634.3L1017.2 650.4M1033.5 659.8L908.7 622.9M908.7 622.9L1054.4 496.0M1017.2 650.4L946.4 471.6M939.6 555.8L1027.5 563.9M1043.6 580.9L914.6 537.0M914.6 537.0L1066.0 404.5M1027.5 563.9L953.7 380.9M946.4 471.6L1038.7 470.3M1054.4 496.0L921.0 444.1M921.0 444.1L1078.6 305.6M1038.7 470.3L961.5 283.0M953.7 380.9L1050.9 368.6M1066.0 404.5L927.9 343.5M933.3 634.3L1067.6 517.6M1033.5 659.8L967.8 494.7M960.8 571.8L1043.6 580.9M1057.1 595.2L939.6 555.8M939.6 555.8L1078.7 434.4M1043.6 580.9L975.2 412.2M967.8 494.7L1054.4 496.0M1067.6 517.6L946.4 471.6M946.4 471.6L1090.7 345.1M1054.4 496.0L983.2 323.7M975.2 412.2L1066.0 404.5M1078.7 434.4L953.7 380.9M953.7 380.9L1103.6 248.9M1066.0 404.5L991.8 228.5M983.2 323.7L1078.6 305.6M1090.7 345.1L961.5 283.0M960.8 571.8L1089.5 459.8M1057.1 595.2L993.6 438.9M986.1 514.5L1067.6 517.6M1078.8 536.0L967.8 494.7M967.8 494.7L1100.9 378.4M1067.6 517.6L1001.6 358.1M993.6 438.9L1078.7 434.4M1089.5 459.8L975.2 412.2M975.2 412.2L1113.1 291.2M1078.7 434.4L1010.1 271.7M1001.6 358.1L1090.7 345.1M1100.9 378.4L983.2 323.7M983.2 323.7L1126.2 197.6M1090.7 345.1L1019.3 179.2M1010.1 271.7L1103.6 248.9M1113.1 291.2L991.8 228.5M986.1 514.5L1109.6 406.8M1078.8 536.0L1017.3 387.5M1009.4 461.8L1089.5 459.8M1098.7 481.6L993.6 438.9M993.6 438.9L1121.1 327.1M1089.5 459.8L1025.7 308.5M1017.3 387.5L1100.9 378.4M1109.6 406.8L1001.6 358.1M1001.6 358.1L1133.5 242.1M1100.9 378.4L1034.7 224.3M1025.7 308.5L1113.1 291.2M1121.1 327.1L1010.1 271.7M1010.1 271.7L1146.7 151.1M1113.1 291.2L1044.3 134.2M1034.7 224.3L1126.2 197.6M1133.5 242.1L1019.3 179.2M979.2 808.6L1130.0 679.1M1092.6 840.7L1017.2 650.4M1007.6 730.6L1106.3 759.1M1116.1 759.7L988.1 727.3M988.1 727.3L1145.1 592.0M1106.3 759.1L1027.5 563.9M1017.2 650.4L1121.2 670.5M1130.0 679.1L997.8 639.3M997.8 639.3L1161.4 497.6M1121.2 670.5L1038.7 470.3M1027.5 563.9L1137.5 574.0M1145.1 592.0L1008.3 543.6M1008.3 543.6L1179.2 394.8M1137.5 574.0L1050.9 368.6M1038.7 470.3L1155.2 468.6M1161.4 497.6L1019.8 439.2M1007.6 730.6L1151.4 606.9M1116.1 759.7L1043.6 580.9M1033.5 659.8L1130.0 679.1M1137.4 686.3L1017.2 650.4M1017.2 650.4L1166.6 521.3M1130.0 679.1L1054.4 496.0M1043.6 580.9L1145.1 592.0M1151.4 606.9L1027.5 563.9M1027.5 563.9L1182.9 429.0M1145.1 592.0L1066.0 404.5M1054.4 496.0L1161.4 497.6M1166.6 521.3L1038.7 470.3M1038.7 470.3L1200.6 329.0M1161.4 497.6L1078.6 305.6M1066.0 404.5L1179.2 394.8M1182.9 429.0L1050.9 368.6M1033.5 659.8L1170.9 541.3M1137.4 686.3L1067.6 517.6M1057.1 595.2L1151.4 606.9M1156.8 619.4L1043.6 580.9M1043.6 580.9L1186.0 457.4M1151.4 606.9L1078.7 434.4M1067.6 517.6L1166.6 521.3M1170.9 541.3L1054.4 496.0M1054.4 496.0L1202.3 367.3M1166.6 521.3L1090.7 345.1M1078.7 434.4L1182.9 429.0M1186.0 457.4L1066.0 404.5M1066.0 404.5L1219.8 270.0M1182.9 429.0L1103.6 248.9M1090.7 345.1L1200.6 329.0M1202.3 367.3L1078.6 305.6M1057.1 595.2L1188.6 481.5M1156.8 619.4L1089.5 459.8M1078.8 536.0L1170.9 541.3M1174.5 558.2L1067.6 517.6M1067.6 517.6L1203.7 399.4M1170.9 541.3L1100.9 378.4M1089.5 459.8L1186.0 457.4M1188.6 481.5L1078.7 434.4M1078.7 434.4L1219.8 311.4M1186.0 457.4L1113.1 291.2M1100.9 378.4L1202.3 367.3M1203.7 399.4L1090.7 345.1M1090.7 345.1L1237.2 216.8M1202.3 367.3L1126.2 197.6M1113.1 291.2L1219.8 270.0M1219.8 311.4L1103.6 248.9M1078.8 536.0L1204.8 426.7M1174.5 558.2L1109.6 406.8M1098.7 481.6L1188.6 481.5M1190.8 502.0L1089.5 459.8M1089.5 459.8L1219.8 346.3M1188.6 481.5L1121.1 327.1M1109.6 406.8L1203.7 399.4M1204.8 426.7L1100.9 378.4M1100.9 378.4L1235.8 260.5M1203.7 399.4L1133.5 242.1M1121.1 327.1L1219.8 311.4M1219.8 346.3L1113.1 291.2M1113.1 291.2L1252.9 168.5M1219.8 311.4L1146.7 151.1M1133.5 242.1L1237.2 216.8M1235.8 260.5L1126.2 197.6" stroke="#15181c" stroke-width="1.3" fill="none" stroke-linecap="round"/><g stroke="#5f6670" stroke-width="1.2" fill="none"><path d="M45.4 784.1L43.7 750.7M45.4 784.1L58 766M45.4 784.1L79.7 791.8"/></g></svg>
<span class="t" style="left:199.5px;top:908.2px;font-size:15px;color:#5f6670;transform:scaleX(1.0000);">z</span>
<span class="t" style="left:212.0px;top:919.7px;font-size:15px;color:#5f6670;transform:scaleX(1.0667);">y</span>
<span class="t" style="left:234.0px;top:947.7px;font-size:15px;color:#5f6670;transform:scaleX(1.0667);">x</span>
</body></html>
